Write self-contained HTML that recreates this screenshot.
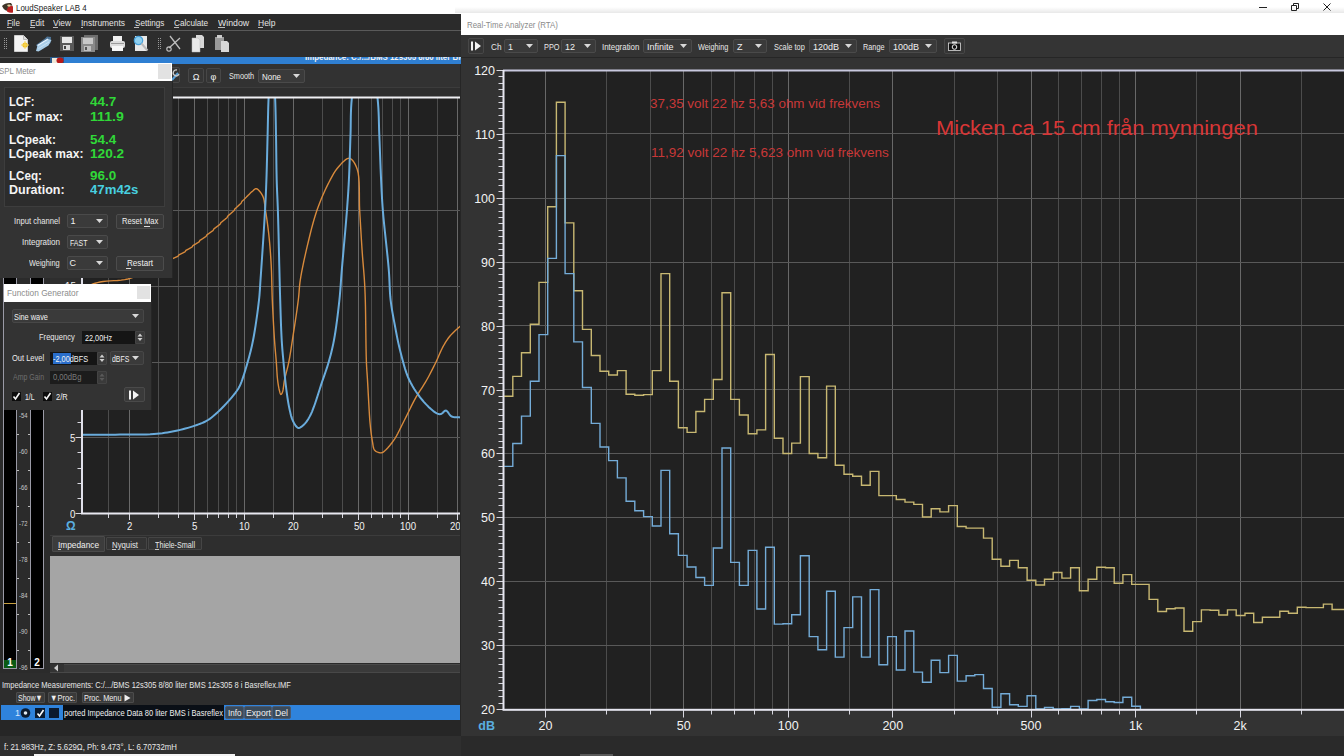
<!DOCTYPE html>
<html><head><meta charset="utf-8"><title>LoudSpeaker LAB 4</title>
<style>
html,body{margin:0;padding:0}
body{width:1344px;height:756px;overflow:hidden;position:relative;background:#2d2d2d;font-family:"Liberation Sans",sans-serif}
.r{position:absolute}
.t{position:absolute;white-space:pre;line-height:1;transform-origin:0 0;font-family:"Liberation Sans",sans-serif}
svg.r{overflow:visible}
</style></head><body>
<div class="r" style="left:0px;top:0px;width:1344px;height:14px;background:#ffffff;"></div>
<svg class="r" style="left:1px;top:2px" width="13" height="12" viewBox="0 0 13 12"><path d="M7 4 Q10 3 12 4.5 L12 10.5 Q9 11.5 6 9.5 Q5 7 7 4Z" fill="#b82222"/><path d="M1 4 Q4 0.5 10 1 L11.5 3.5 Q9 3 7 5 L5.5 9 Q2 7 1 4Z" fill="#3e3528"/><ellipse cx="8" cy="3.6" rx="1.8" ry="1.1" fill="#e6d4a0"/></svg>
<div class="t" style="left:16.00px;top:4px;font-size:9px;color:#202020;transform:scaleX(0.876);">LoudSpeaker LAB 4</div>
<div class="r" style="left:0px;top:14px;width:461px;height:16px;background:#2b2b2b;"></div>
<div class="t" style="left:7.00px;top:19px;font-size:9px;color:#e4e4e4;transform:scaleX(0.883);">File</div>
<div class="r" style="left:7px;top:27px;width:5px;height:1px;background:#bbbbbb;"></div>
<div class="t" style="left:29.50px;top:19px;font-size:9px;color:#e4e4e4;transform:scaleX(0.916);">Edit</div>
<div class="r" style="left:30px;top:27px;width:5px;height:1px;background:#bbbbbb;"></div>
<div class="t" style="left:53.00px;top:19px;font-size:9px;color:#e4e4e4;transform:scaleX(0.930);">View</div>
<div class="r" style="left:53px;top:27px;width:5px;height:1px;background:#bbbbbb;"></div>
<div class="t" style="left:80.60px;top:19px;font-size:9px;color:#e4e4e4;transform:scaleX(0.936);">Instruments</div>
<div class="r" style="left:81px;top:27px;width:2px;height:1px;background:#bbbbbb;"></div>
<div class="t" style="left:134.50px;top:19px;font-size:9px;color:#e4e4e4;transform:scaleX(0.901);">Settings</div>
<div class="r" style="left:134px;top:27px;width:5px;height:1px;background:#bbbbbb;"></div>
<div class="t" style="left:173.80px;top:19px;font-size:9px;color:#e4e4e4;transform:scaleX(0.911);">Calculate</div>
<div class="r" style="left:174px;top:27px;width:5px;height:1px;background:#bbbbbb;"></div>
<div class="t" style="left:217.50px;top:19px;font-size:9px;color:#e4e4e4;transform:scaleX(0.975);">Window</div>
<div class="r" style="left:218px;top:27px;width:7px;height:1px;background:#bbbbbb;"></div>
<div class="t" style="left:258.30px;top:19px;font-size:9px;color:#e4e4e4;transform:scaleX(0.945);">Help</div>
<div class="r" style="left:258px;top:27px;width:5px;height:1px;background:#bbbbbb;"></div>
<div class="r" style="left:0px;top:30px;width:461px;height:1px;background:#5a5a5a;"></div>
<div class="r" style="left:0px;top:31px;width:461px;height:26px;background:#2d2d2d;"></div>
<div class="r" style="left:4px;top:38px;width:1px;height:1px;background:#9a9a9a;"></div><div class="r" style="left:6px;top:38px;width:1px;height:1px;background:#9a9a9a;"></div><div class="r" style="left:4px;top:40px;width:1px;height:1px;background:#9a9a9a;"></div><div class="r" style="left:6px;top:40px;width:1px;height:1px;background:#9a9a9a;"></div><div class="r" style="left:4px;top:42px;width:1px;height:1px;background:#9a9a9a;"></div><div class="r" style="left:6px;top:42px;width:1px;height:1px;background:#9a9a9a;"></div><div class="r" style="left:4px;top:44px;width:1px;height:1px;background:#9a9a9a;"></div><div class="r" style="left:6px;top:44px;width:1px;height:1px;background:#9a9a9a;"></div><div class="r" style="left:4px;top:46px;width:1px;height:1px;background:#9a9a9a;"></div><div class="r" style="left:6px;top:46px;width:1px;height:1px;background:#9a9a9a;"></div><div class="r" style="left:4px;top:48px;width:1px;height:1px;background:#9a9a9a;"></div><div class="r" style="left:6px;top:48px;width:1px;height:1px;background:#9a9a9a;"></div>
<div class="r" style="left:158px;top:38px;width:1px;height:1px;background:#9a9a9a;"></div><div class="r" style="left:160px;top:38px;width:1px;height:1px;background:#9a9a9a;"></div><div class="r" style="left:158px;top:40px;width:1px;height:1px;background:#9a9a9a;"></div><div class="r" style="left:160px;top:40px;width:1px;height:1px;background:#9a9a9a;"></div><div class="r" style="left:158px;top:42px;width:1px;height:1px;background:#9a9a9a;"></div><div class="r" style="left:160px;top:42px;width:1px;height:1px;background:#9a9a9a;"></div><div class="r" style="left:158px;top:44px;width:1px;height:1px;background:#9a9a9a;"></div><div class="r" style="left:160px;top:44px;width:1px;height:1px;background:#9a9a9a;"></div><div class="r" style="left:158px;top:46px;width:1px;height:1px;background:#9a9a9a;"></div><div class="r" style="left:160px;top:46px;width:1px;height:1px;background:#9a9a9a;"></div><div class="r" style="left:158px;top:48px;width:1px;height:1px;background:#9a9a9a;"></div><div class="r" style="left:160px;top:48px;width:1px;height:1px;background:#9a9a9a;"></div>
<svg class="r" style="left:13px;top:34px" width="16" height="19"><path d="M1.5 1.5h9l4 4v12h-13z" fill="#f4f4f4" stroke="#cfcfcf"/><path d="M10.5 1.5v4h4" fill="#ddd" stroke="#bbb"/><circle cx="12" cy="11" r="2.6" fill="#f2c020"/><path d="M12 7v8M8 11h8" stroke="#f5d860" stroke-width="1"/></svg>
<svg class="r" style="left:35px;top:35px" width="17" height="17"><path d="M1 10L10 3.5 12 1.5 16 2 15.5 8 5 15.5z" fill="#4f7597"/><path d="M1 16L2.5 10.5 13 4 16.5 5 13.5 10.5 3.5 16.5z" fill="#a9cde8"/><path d="M2.5 10.5L13 4" stroke="#eaf5ff" stroke-width="1.2"/><path d="M3.5 13.5L14 7" stroke="#d0e6f6" stroke-width="0.8"/></svg>
<svg class="r" style="left:59px;top:35px" width="16" height="17"><rect x="1" y="1" width="14" height="15" fill="#5a5a5a"/><rect x="3" y="2" width="10" height="6" fill="#e8e8e8"/><rect x="4" y="10" width="7" height="5" fill="#dcdcdc"/><rect x="5" y="11" width="2" height="3" fill="#444"/></svg>
<svg class="r" style="left:80px;top:34px" width="19" height="19"><rect x="4" y="1" width="14" height="15" fill="#6e6e6e"/><rect x="1" y="3" width="14" height="15" fill="#8a8a8a"/><rect x="3" y="4" width="10" height="6" fill="#c8c8c8"/><rect x="4" y="12" width="7" height="5" fill="#c0c0c0"/><rect x="5" y="13" width="2" height="3" fill="#555"/></svg>
<svg class="r" style="left:109px;top:35px" width="17" height="17"><rect x="4" y="1" width="9" height="5" fill="#f0f0f0"/><rect x="1" y="6" width="15" height="7" rx="2" fill="#dcdcdc"/><rect x="3" y="11" width="11" height="5" fill="#f8f8f8"/><rect x="2" y="8" width="13" height="1" fill="#9a9a9a"/></svg>
<svg class="r" style="left:132px;top:34px" width="18" height="19"><rect x="3" y="2" width="12" height="15" fill="#e8e8e8"/><circle cx="6.5" cy="6.5" r="4.2" fill="#8fd0f0" stroke="#4aa0d8" stroke-width="1.2"/><path d="M9.5 9.5l6 7" stroke="#bbb" stroke-width="2"/></svg>
<svg class="r" style="left:166px;top:34px" width="17" height="19"><path d="M4 2l10 13M14 4l-11 10" stroke="#bdbdbd" stroke-width="1.3" fill="none"/><circle cx="3" cy="15" r="2.2" fill="none" stroke="#bdbdbd" stroke-width="1.2"/></svg>
<svg class="r" style="left:191px;top:34px" width="14" height="19"><path d="M5 1h6l2 2v11h-8z" fill="#d8d8d8"/><path d="M1 4h6l2 2v12h-8z" fill="#e8e8e8" stroke="#bbb" stroke-width="0.5"/></svg>
<svg class="r" style="left:214px;top:34px" width="16" height="19"><rect x="1" y="3" width="9" height="13" fill="#9a9a9a"/><rect x="3" y="1" width="5" height="3" fill="#ccc"/><path d="M7 7h6l2 2v9h-8z" fill="#d8d8d8"/></svg>
<div class="r" style="left:0px;top:57px;width:461px;height:7px;background:#2a2a2a;"></div>
<div class="r" style="left:0px;top:57px;width:50px;height:1px;background:#505050;"></div>
<div class="r" style="left:50px;top:57px;width:14px;height:7px;background:#2a5a8a;"></div>
<div class="r" style="left:52px;top:58px;width:6px;height:5px;background:#efe8d8;"></div>
<svg class="r" style="left:56px;top:57px" width="8" height="7"><ellipse cx="4" cy="3.5" rx="3.5" ry="3" fill="#b81818"/></svg>
<div class="r" style="left:64px;top:57px;width:397px;height:7px;background:#2f7fd2;"></div>
<div class="r" style="left:300px;top:57px;width:161px;height:7px;overflow:hidden"><div class="t" style="left:5.00px;top:-4px;font-size:9px;color:#f0f0f0;font-weight:bold;transform:scaleX(0.875);">Impedance: C:/.../BMS 12s305 8/80 liter BMS</div></div>
<div class="r" style="left:0px;top:64px;width:461px;height:609px;background:#2e2e2e;"></div>
<div class="r" style="left:50px;top:64px;width:411px;height:23px;background:#323232;"></div>
<div class="r" style="left:50px;top:87px;width:411px;height:1px;background:#3c3c3c;"></div>
<div class="r" style="left:166px;top:67px;width:14px;height:16px;box-sizing:border-box;background:#353535;border:1px solid #474747;border-radius:2px"></div>
<svg class="r" style="left:170px;top:69px" width="10" height="12"><path d="M2 11l6-7" stroke="#5aa0d8" stroke-width="2"/><path d="M7 1a3 3 0 1 0 2 4" fill="none" stroke="#ccc" stroke-width="1.3"/></svg>
<div class="r" style="left:188px;top:68px;width:16px;height:15px;box-sizing:border-box;background:#353535;border:1px solid #474747;border-radius:2px"></div>
<div class="t" style="left:192.64px;top:73px;font-size:9px;color:#f0f0f0;">Ω</div>
<div class="r" style="left:206px;top:68px;width:15px;height:15px;box-sizing:border-box;background:#353535;border:1px solid #474747;border-radius:2px"></div>
<div class="t" style="left:210.58px;top:73px;font-size:9px;color:#f0f0f0;">φ</div>
<div class="t" style="left:228.80px;top:72px;font-size:9px;color:#e6e6e6;transform:scaleX(0.812);">Smooth</div>
<div class="r" style="left:258px;top:69px;width:47px;height:14px;box-sizing:border-box;background:#3a3a3a;border:1px solid #4a4a4a;border-radius:2px"></div><div class="t" style="left:262.00px;top:73px;font-size:9px;color:#f0f0f0;transform:scaleX(0.883);">None</div><svg class="r" style="left:293px;top:74.0px" width="7" height="4"><path d="M0 0h7l-3.5 4z" fill="#d8d8d8"/></svg>
<svg class="r" style="left:0;top:0" width="1344" height="756"><rect x="82" y="97" width="379" height="417" fill="#212121"/><line x1="108.50" y1="98" x2="108.50" y2="513" stroke="#4c4c4c" stroke-width="1"/><line x1="129.50" y1="98" x2="129.50" y2="513" stroke="#686868" stroke-width="1"/><line x1="158.50" y1="98" x2="158.50" y2="513" stroke="#4c4c4c" stroke-width="1"/><line x1="178.50" y1="98" x2="178.50" y2="513" stroke="#4c4c4c" stroke-width="1"/><line x1="194.50" y1="98" x2="194.50" y2="513" stroke="#686868" stroke-width="1"/><line x1="207.50" y1="98" x2="207.50" y2="513" stroke="#4c4c4c" stroke-width="1"/><line x1="218.50" y1="98" x2="218.50" y2="513" stroke="#4c4c4c" stroke-width="1"/><line x1="228.50" y1="98" x2="228.50" y2="513" stroke="#4c4c4c" stroke-width="1"/><line x1="236.50" y1="98" x2="236.50" y2="513" stroke="#4c4c4c" stroke-width="1"/><line x1="244.50" y1="98" x2="244.50" y2="513" stroke="#686868" stroke-width="1"/><line x1="273.50" y1="98" x2="273.50" y2="513" stroke="#4c4c4c" stroke-width="1"/><line x1="293.50" y1="98" x2="293.50" y2="513" stroke="#686868" stroke-width="1"/><line x1="322.50" y1="98" x2="322.50" y2="513" stroke="#4c4c4c" stroke-width="1"/><line x1="342.50" y1="98" x2="342.50" y2="513" stroke="#4c4c4c" stroke-width="1"/><line x1="358.50" y1="98" x2="358.50" y2="513" stroke="#686868" stroke-width="1"/><line x1="371.50" y1="98" x2="371.50" y2="513" stroke="#4c4c4c" stroke-width="1"/><line x1="382.50" y1="98" x2="382.50" y2="513" stroke="#4c4c4c" stroke-width="1"/><line x1="392.50" y1="98" x2="392.50" y2="513" stroke="#4c4c4c" stroke-width="1"/><line x1="400.50" y1="98" x2="400.50" y2="513" stroke="#4c4c4c" stroke-width="1"/><line x1="408.50" y1="98" x2="408.50" y2="513" stroke="#686868" stroke-width="1"/><line x1="437.50" y1="98" x2="437.50" y2="513" stroke="#4c4c4c" stroke-width="1"/><line x1="457.50" y1="98" x2="457.50" y2="513" stroke="#686868" stroke-width="1"/><line x1="83" y1="437.50" x2="461" y2="437.50" stroke="#595959" stroke-width="1"/><line x1="83" y1="362.50" x2="461" y2="362.50" stroke="#595959" stroke-width="1"/><line x1="83" y1="286.50" x2="461" y2="286.50" stroke="#595959" stroke-width="1"/><line x1="83" y1="210.50" x2="461" y2="210.50" stroke="#595959" stroke-width="1"/><line x1="83" y1="135.50" x2="461" y2="135.50" stroke="#595959" stroke-width="1"/><line x1="75.5" y1="513.50" x2="82" y2="513.50" stroke="#d8d8e0" stroke-width="1"/><line x1="77.5" y1="498.50" x2="82" y2="498.50" stroke="#d8d8e0" stroke-width="1"/><line x1="77.5" y1="483.50" x2="82" y2="483.50" stroke="#d8d8e0" stroke-width="1"/><line x1="77.5" y1="468.50" x2="82" y2="468.50" stroke="#d8d8e0" stroke-width="1"/><line x1="77.5" y1="452.50" x2="82" y2="452.50" stroke="#d8d8e0" stroke-width="1"/><line x1="75.5" y1="437.50" x2="82" y2="437.50" stroke="#d8d8e0" stroke-width="1"/><line x1="77.5" y1="422.50" x2="82" y2="422.50" stroke="#d8d8e0" stroke-width="1"/><line x1="77.5" y1="407.50" x2="82" y2="407.50" stroke="#d8d8e0" stroke-width="1"/><line x1="77.5" y1="392.50" x2="82" y2="392.50" stroke="#d8d8e0" stroke-width="1"/><line x1="77.5" y1="377.50" x2="82" y2="377.50" stroke="#d8d8e0" stroke-width="1"/><line x1="75.5" y1="362.50" x2="82" y2="362.50" stroke="#d8d8e0" stroke-width="1"/><line x1="77.5" y1="346.50" x2="82" y2="346.50" stroke="#d8d8e0" stroke-width="1"/><line x1="77.5" y1="331.50" x2="82" y2="331.50" stroke="#d8d8e0" stroke-width="1"/><line x1="77.5" y1="316.50" x2="82" y2="316.50" stroke="#d8d8e0" stroke-width="1"/><line x1="77.5" y1="301.50" x2="82" y2="301.50" stroke="#d8d8e0" stroke-width="1"/><line x1="75.5" y1="286.50" x2="82" y2="286.50" stroke="#d8d8e0" stroke-width="1"/><line x1="77.5" y1="271.50" x2="82" y2="271.50" stroke="#d8d8e0" stroke-width="1"/><line x1="77.5" y1="256.50" x2="82" y2="256.50" stroke="#d8d8e0" stroke-width="1"/><line x1="77.5" y1="240.50" x2="82" y2="240.50" stroke="#d8d8e0" stroke-width="1"/><line x1="77.5" y1="225.50" x2="82" y2="225.50" stroke="#d8d8e0" stroke-width="1"/><line x1="75.5" y1="210.50" x2="82" y2="210.50" stroke="#d8d8e0" stroke-width="1"/><line x1="77.5" y1="195.50" x2="82" y2="195.50" stroke="#d8d8e0" stroke-width="1"/><line x1="77.5" y1="180.50" x2="82" y2="180.50" stroke="#d8d8e0" stroke-width="1"/><line x1="77.5" y1="165.50" x2="82" y2="165.50" stroke="#d8d8e0" stroke-width="1"/><line x1="77.5" y1="150.50" x2="82" y2="150.50" stroke="#d8d8e0" stroke-width="1"/><line x1="75.5" y1="135.50" x2="82" y2="135.50" stroke="#d8d8e0" stroke-width="1"/><line x1="77.5" y1="119.50" x2="82" y2="119.50" stroke="#d8d8e0" stroke-width="1"/><line x1="77.5" y1="104.50" x2="82" y2="104.50" stroke="#d8d8e0" stroke-width="1"/><line x1="108.50" y1="514" x2="108.50" y2="518" stroke="#d8d8e0" stroke-width="1"/><line x1="129.50" y1="514" x2="129.50" y2="520" stroke="#d8d8e0" stroke-width="1"/><line x1="158.50" y1="514" x2="158.50" y2="518" stroke="#d8d8e0" stroke-width="1"/><line x1="178.50" y1="514" x2="178.50" y2="518" stroke="#d8d8e0" stroke-width="1"/><line x1="194.50" y1="514" x2="194.50" y2="520" stroke="#d8d8e0" stroke-width="1"/><line x1="207.50" y1="514" x2="207.50" y2="518" stroke="#d8d8e0" stroke-width="1"/><line x1="218.50" y1="514" x2="218.50" y2="518" stroke="#d8d8e0" stroke-width="1"/><line x1="228.50" y1="514" x2="228.50" y2="518" stroke="#d8d8e0" stroke-width="1"/><line x1="236.50" y1="514" x2="236.50" y2="518" stroke="#d8d8e0" stroke-width="1"/><line x1="244.50" y1="514" x2="244.50" y2="520" stroke="#d8d8e0" stroke-width="1"/><line x1="273.50" y1="514" x2="273.50" y2="518" stroke="#d8d8e0" stroke-width="1"/><line x1="293.50" y1="514" x2="293.50" y2="520" stroke="#d8d8e0" stroke-width="1"/><line x1="322.50" y1="514" x2="322.50" y2="518" stroke="#d8d8e0" stroke-width="1"/><line x1="342.50" y1="514" x2="342.50" y2="518" stroke="#d8d8e0" stroke-width="1"/><line x1="358.50" y1="514" x2="358.50" y2="520" stroke="#d8d8e0" stroke-width="1"/><line x1="371.50" y1="514" x2="371.50" y2="518" stroke="#d8d8e0" stroke-width="1"/><line x1="382.50" y1="514" x2="382.50" y2="518" stroke="#d8d8e0" stroke-width="1"/><line x1="392.50" y1="514" x2="392.50" y2="518" stroke="#d8d8e0" stroke-width="1"/><line x1="400.50" y1="514" x2="400.50" y2="518" stroke="#d8d8e0" stroke-width="1"/><line x1="408.50" y1="514" x2="408.50" y2="520" stroke="#d8d8e0" stroke-width="1"/><line x1="437.50" y1="514" x2="437.50" y2="518" stroke="#d8d8e0" stroke-width="1"/><line x1="457.50" y1="514" x2="457.50" y2="520" stroke="#d8d8e0" stroke-width="1"/><clipPath id="ic"><rect x="83" y="98" width="378" height="415"/></clipPath><path clip-path="url(#ic)" d="M82.00 288.00 L84.22 287.23 L86.39 286.43 L88.55 285.61 L90.72 284.80 L92.92 284.02 L95.18 283.28 L97.53 282.60 L100.00 282.00 L103.21 281.45 L106.63 281.08 L110.20 280.84 L113.85 280.65 L117.52 280.44 L121.14 280.14 L124.66 279.68 L128.00 279.00 L130.92 278.17 L133.76 277.21 L136.53 276.15 L139.25 274.99 L141.94 273.78 L144.61 272.52 L147.29 271.26 L150.00 270.00 L152.96 268.60 L156.20 267.01 L159.53 265.32 L162.81 263.63 L165.85 262.05 L168.51 260.66 L170.62 259.58 L172.00 258.89 L172.19 258.81 L172.34 258.74 L172.47 258.68 L172.58 258.64 L172.68 258.60 L172.78 258.56 L172.88 258.51 L173.00 258.46 L173.13 258.41 L173.25 258.35 L173.38 258.30 L173.50 258.24 L173.63 258.19 L173.75 258.13 L173.88 258.08 L174.00 258.02 L174.13 257.97 L174.25 257.91 L174.38 257.86 L174.50 257.80 L174.63 257.75 L174.75 257.69 L174.88 257.63 L175.00 257.58 L175.13 257.52 L175.25 257.47 L175.38 257.41 L175.50 257.35 L175.63 257.30 L175.75 257.24 L175.88 257.18 L176.00 257.13 L176.13 257.07 L176.25 257.01 L176.38 256.95 L176.50 256.90 L176.63 256.84 L176.75 256.78 L176.88 256.72 L177.00 256.66 L177.13 256.61 L177.25 256.56 L177.38 256.51 L177.51 256.47 L177.64 256.41 L177.76 256.35 L177.88 256.28 L178.00 256.20 L178.14 256.06 L178.26 255.89 L178.38 255.71 L178.50 255.51 L178.62 255.31 L178.74 255.12 L178.86 254.96 L179.00 254.82 L179.12 254.73 L179.24 254.66 L179.36 254.60 L179.49 254.54 L179.62 254.49 L179.75 254.44 L179.87 254.39 L180.00 254.33 L180.13 254.27 L180.25 254.21 L180.38 254.15 L180.50 254.09 L180.63 254.03 L180.75 253.97 L180.88 253.90 L181.00 253.84 L181.13 253.78 L181.25 253.72 L181.38 253.66 L181.50 253.59 L181.63 253.53 L181.75 253.47 L181.88 253.41 L182.00 253.34 L182.13 253.28 L182.25 253.22 L182.38 253.15 L182.50 253.09 L182.63 253.03 L182.75 252.96 L182.88 252.90 L183.00 252.84 L183.13 252.77 L183.25 252.71 L183.38 252.64 L183.50 252.58 L183.63 252.52 L183.75 252.45 L183.88 252.39 L184.00 252.32 L184.13 252.26 L184.25 252.21 L184.38 252.15 L184.51 252.10 L184.64 252.04 L184.76 251.97 L184.88 251.89 L185.00 251.80 L185.14 251.66 L185.26 251.48 L185.38 251.29 L185.50 251.09 L185.62 250.88 L185.74 250.69 L185.86 250.52 L186.00 250.37 L186.12 250.28 L186.24 250.20 L186.36 250.13 L186.49 250.07 L186.62 250.01 L186.75 249.96 L186.87 249.90 L187.00 249.83 L187.13 249.77 L187.25 249.70 L187.38 249.63 L187.50 249.56 L187.63 249.49 L187.75 249.43 L187.88 249.36 L188.00 249.29 L188.13 249.22 L188.25 249.15 L188.38 249.08 L188.50 249.01 L188.63 248.94 L188.75 248.88 L188.88 248.81 L189.00 248.74 L189.13 248.67 L189.25 248.60 L189.38 248.53 L189.50 248.46 L189.63 248.39 L189.75 248.32 L189.88 248.25 L190.00 248.18 L190.13 248.11 L190.25 248.03 L190.38 247.96 L190.50 247.89 L190.63 247.82 L190.75 247.75 L190.88 247.68 L191.00 247.61 L191.13 247.54 L191.25 247.48 L191.38 247.42 L191.51 247.36 L191.64 247.29 L191.76 247.22 L191.88 247.13 L192.00 247.03 L192.14 246.88 L192.26 246.70 L192.38 246.50 L192.50 246.29 L192.62 246.08 L192.74 245.88 L192.86 245.70 L193.00 245.55 L193.12 245.45 L193.24 245.36 L193.36 245.29 L193.49 245.22 L193.62 245.16 L193.75 245.10 L193.87 245.03 L194.00 244.96 L194.13 244.89 L194.25 244.81 L194.38 244.74 L194.50 244.66 L194.63 244.59 L194.75 244.51 L194.88 244.44 L195.00 244.36 L195.13 244.29 L195.25 244.21 L195.38 244.14 L195.50 244.06 L195.63 243.98 L195.75 243.91 L195.88 243.83 L196.00 243.76 L196.13 243.68 L196.25 243.60 L196.38 243.53 L196.50 243.45 L196.63 243.37 L196.75 243.30 L196.88 243.22 L197.00 243.14 L197.13 243.06 L197.25 242.99 L197.38 242.91 L197.50 242.83 L197.63 242.75 L197.75 242.68 L197.88 242.60 L198.00 242.52 L198.13 242.45 L198.25 242.38 L198.38 242.31 L198.51 242.24 L198.64 242.17 L198.76 242.09 L198.88 242.00 L199.00 241.89 L199.14 241.74 L199.26 241.55 L199.38 241.34 L199.50 241.13 L199.62 240.91 L199.74 240.70 L199.86 240.52 L200.00 240.36 L200.12 240.25 L200.24 240.16 L200.36 240.08 L200.49 240.00 L200.62 239.93 L200.75 239.86 L200.87 239.79 L201.00 239.71 L201.13 239.63 L201.25 239.55 L201.38 239.47 L201.50 239.39 L201.63 239.31 L201.75 239.22 L201.88 239.14 L202.00 239.06 L202.13 238.98 L202.25 238.90 L202.38 238.81 L202.50 238.73 L202.63 238.65 L202.75 238.57 L202.88 238.48 L203.00 238.40 L203.13 238.32 L203.25 238.24 L203.38 238.15 L203.50 238.07 L203.63 237.99 L203.75 237.90 L203.88 237.82 L204.00 237.74 L204.13 237.65 L204.25 237.57 L204.38 237.48 L204.50 237.40 L204.63 237.31 L204.75 237.23 L204.88 237.15 L205.00 237.06 L205.13 236.98 L205.25 236.90 L205.38 236.83 L205.51 236.75 L205.64 236.67 L205.76 236.59 L205.88 236.49 L206.00 236.38 L206.14 236.21 L206.26 236.02 L206.38 235.81 L206.50 235.59 L206.62 235.36 L206.74 235.15 L206.86 234.96 L207.00 234.79 L207.12 234.68 L207.24 234.58 L207.36 234.49 L207.49 234.41 L207.62 234.33 L207.75 234.26 L207.87 234.18 L208.00 234.09 L208.13 234.00 L208.25 233.92 L208.38 233.83 L208.50 233.74 L208.63 233.65 L208.75 233.56 L208.88 233.48 L209.00 233.39 L209.13 233.30 L209.25 233.21 L209.38 233.12 L209.50 233.03 L209.63 232.94 L209.75 232.85 L209.88 232.76 L210.00 232.68 L210.13 232.59 L210.25 232.50 L210.38 232.41 L210.50 232.32 L210.63 232.23 L210.75 232.14 L210.88 232.05 L211.00 231.96 L211.13 231.86 L211.25 231.77 L211.38 231.68 L211.50 231.59 L211.63 231.50 L211.75 231.41 L211.88 231.32 L212.00 231.23 L212.13 231.14 L212.25 231.06 L212.38 230.98 L212.51 230.89 L212.64 230.81 L212.76 230.71 L212.88 230.61 L213.00 230.49 L213.14 230.32 L213.26 230.12 L213.38 229.90 L213.50 229.67 L213.62 229.44 L213.74 229.22 L213.86 229.02 L214.00 228.85 L214.12 228.73 L214.24 228.63 L214.36 228.53 L214.49 228.44 L214.62 228.36 L214.75 228.28 L214.87 228.19 L215.00 228.10 L215.13 228.01 L215.25 227.91 L215.38 227.82 L215.50 227.72 L215.63 227.63 L215.75 227.53 L215.88 227.44 L216.00 227.34 L216.13 227.25 L216.25 227.15 L216.38 227.06 L216.50 226.96 L216.63 226.86 L216.75 226.77 L216.88 226.67 L217.00 226.58 L217.13 226.48 L217.25 226.38 L217.38 226.29 L217.50 226.19 L217.63 226.09 L217.75 226.00 L217.88 225.90 L218.00 225.80 L218.13 225.71 L218.25 225.61 L218.38 225.51 L218.50 225.41 L218.63 225.32 L218.75 225.22 L218.88 225.12 L219.00 225.02 L219.13 224.93 L219.25 224.84 L219.38 224.75 L219.51 224.66 L219.64 224.57 L219.76 224.47 L219.88 224.36 L220.00 224.23 L220.14 224.05 L220.26 223.85 L220.38 223.62 L220.50 223.39 L220.62 223.15 L220.74 222.93 L220.86 222.72 L221.00 222.54 L221.12 222.41 L221.24 222.30 L221.36 222.20 L221.49 222.10 L221.62 222.01 L221.75 221.92 L221.87 221.83 L222.00 221.73 L222.13 221.63 L222.25 221.53 L222.38 221.43 L222.50 221.33 L222.63 221.23 L222.75 221.13 L222.88 221.02 L223.00 220.92 L223.13 220.82 L223.25 220.72 L223.38 220.62 L223.50 220.51 L223.63 220.41 L223.75 220.31 L223.88 220.21 L224.00 220.10 L224.13 220.00 L224.25 219.90 L224.38 219.79 L224.50 219.69 L224.63 219.59 L224.75 219.48 L224.88 219.38 L225.00 219.28 L225.13 219.17 L225.25 219.07 L225.38 218.96 L225.50 218.86 L225.63 218.76 L225.75 218.65 L225.88 218.55 L226.00 218.44 L226.13 218.34 L226.25 218.24 L226.38 218.15 L226.51 218.05 L226.64 217.95 L226.76 217.85 L226.88 217.73 L227.00 217.60 L227.14 217.41 L227.26 217.20 L227.38 216.97 L227.50 216.73 L227.62 216.49 L227.74 216.25 L227.86 216.04 L228.00 215.85 L228.12 215.72 L228.24 215.60 L228.36 215.49 L228.49 215.39 L228.62 215.29 L228.75 215.20 L228.87 215.10 L229.00 214.99 L229.13 214.89 L229.25 214.78 L229.38 214.67 L229.50 214.56 L229.63 214.46 L229.75 214.35 L229.88 214.24 L230.00 214.13 L230.13 214.02 L230.25 213.91 L230.38 213.80 L230.50 213.69 L230.63 213.59 L230.75 213.48 L230.88 213.37 L231.00 213.26 L231.13 213.15 L231.25 213.04 L231.38 212.93 L231.50 212.82 L231.63 212.71 L231.75 212.60 L231.88 212.49 L232.00 212.38 L232.13 212.27 L232.25 212.16 L232.38 212.05 L232.50 211.94 L232.63 211.82 L232.75 211.71 L232.88 211.60 L233.00 211.49 L233.13 211.38 L233.25 211.28 L233.38 211.18 L233.51 211.08 L233.64 210.97 L233.76 210.85 L233.88 210.73 L234.00 210.60 L234.14 210.40 L234.26 210.18 L234.38 209.94 L234.50 209.70 L234.62 209.45 L234.74 209.21 L234.86 208.99 L235.00 208.79 L235.12 208.66 L235.24 208.53 L235.36 208.42 L235.49 208.31 L235.62 208.20 L235.75 208.10 L235.87 207.99 L236.00 207.88 L236.13 207.77 L236.25 207.65 L236.38 207.54 L236.50 207.42 L236.63 207.31 L236.75 207.20 L236.88 207.08 L237.00 206.97 L237.13 206.85 L237.25 206.73 L237.38 206.62 L237.50 206.50 L237.63 206.39 L237.75 206.27 L237.88 206.16 L238.00 206.04 L238.13 205.92 L238.25 205.81 L238.38 205.69 L238.50 205.57 L238.63 205.46 L238.75 205.34 L238.88 205.22 L239.00 205.11 L239.13 204.99 L239.25 204.87 L239.38 204.75 L239.50 204.64 L239.63 204.52 L239.75 204.40 L239.88 204.28 L240.00 204.17 L240.13 204.05 L240.25 203.94 L240.38 203.83 L240.51 203.72 L240.64 203.61 L240.76 203.49 L240.88 203.36 L241.00 203.22 L241.14 203.02 L241.26 202.79 L241.38 202.54 L241.50 202.29 L241.62 202.04 L241.74 201.79 L241.86 201.56 L242.00 201.36 L242.12 201.22 L242.24 201.09 L242.36 200.97 L242.49 200.85 L242.62 200.74 L242.75 200.63 L242.87 200.52 L243.00 200.40 L243.13 200.28 L243.25 200.16 L243.38 200.03 L243.50 199.91 L243.63 199.79 L243.75 199.67 L243.88 199.55 L244.00 199.43 L244.13 199.31 L244.25 199.18 L244.38 199.06 L244.50 198.94 L244.63 198.82 L244.75 198.69 L244.88 198.57 L245.00 198.45 L245.13 198.33 L245.25 198.20 L245.38 198.08 L245.50 197.96 L245.63 197.83 L245.75 197.71 L245.88 197.59 L246.00 197.46 L246.13 197.34 L246.25 197.21 L246.38 197.09 L246.50 196.97 L246.63 196.84 L246.75 196.72 L246.88 196.59 L247.00 196.47 L247.12 196.35 L247.23 196.23 L247.35 196.12 L247.46 196.01 L247.58 195.89 L247.70 195.76 L247.84 195.62 L248.00 195.47 L248.37 195.10 L248.80 194.66 L249.28 194.16 L249.80 193.63 L250.35 193.10 L250.90 192.56 L251.46 192.06 L252.00 191.60 L252.51 191.15 L253.04 190.65 L253.57 190.14 L254.10 189.66 L254.64 189.24 L255.19 188.91 L255.74 188.72 L256.30 188.70 L257.12 188.99 L258.00 189.59 L258.91 190.45 L259.83 191.50 L260.71 192.69 L261.54 193.94 L262.28 195.20 L262.90 196.40 L263.43 197.68 L263.83 199.01 L264.13 200.39 L264.36 201.83 L264.56 203.33 L264.74 204.91 L264.94 206.56 L265.20 208.30 L265.65 211.07 L266.11 214.08 L266.59 217.28 L267.07 220.63 L267.54 224.07 L267.99 227.56 L268.41 231.06 L268.80 234.50 L269.18 238.18 L269.54 241.91 L269.87 245.67 L270.18 249.47 L270.46 253.30 L270.73 257.17 L270.97 261.07 L271.20 265.00 L271.40 269.24 L271.56 273.52 L271.68 277.84 L271.79 282.20 L271.89 286.60 L272.00 291.03 L272.13 295.50 L272.30 300.00 L272.52 304.95 L272.77 310.09 L273.04 315.33 L273.32 320.58 L273.61 325.75 L273.91 330.77 L274.21 335.55 L274.50 340.00 L274.72 343.08 L274.95 346.01 L275.18 348.83 L275.41 351.55 L275.65 354.20 L275.87 356.81 L276.09 359.40 L276.30 362.00 L276.47 364.37 L276.62 366.75 L276.76 369.12 L276.90 371.45 L277.05 373.72 L277.20 375.92 L277.39 378.02 L277.60 380.00 L277.78 381.42 L277.96 382.81 L278.16 384.15 L278.36 385.44 L278.58 386.68 L278.81 387.86 L279.05 388.97 L279.30 390.00 L279.48 390.71 L279.66 391.46 L279.85 392.21 L280.05 392.91 L280.25 393.53 L280.46 394.02 L280.67 394.36 L280.90 394.50 L281.09 394.46 L281.29 394.30 L281.50 394.05 L281.71 393.72 L281.92 393.34 L282.12 392.91 L282.32 392.46 L282.50 392.00 L282.82 390.96 L283.09 389.71 L283.31 388.28 L283.52 386.73 L283.73 385.08 L283.95 383.38 L284.20 381.67 L284.50 380.00 L284.95 377.93 L285.46 375.79 L286.01 373.59 L286.58 371.34 L287.17 369.05 L287.75 366.72 L288.30 364.37 L288.80 362.00 L289.30 359.41 L289.77 356.82 L290.21 354.21 L290.63 351.56 L291.05 348.83 L291.48 346.02 L291.93 343.08 L292.40 340.00 L293.10 335.48 L293.87 330.52 L294.68 325.27 L295.50 319.89 L296.30 314.52 L297.05 309.32 L297.73 304.43 L298.30 300.00 L298.62 297.21 L298.86 294.64 L299.06 292.22 L299.23 289.89 L299.42 287.57 L299.64 285.19 L299.93 282.69 L300.30 280.00 L300.91 276.21 L301.63 272.21 L302.43 268.05 L303.30 263.77 L304.23 259.41 L305.20 255.04 L306.20 250.69 L307.20 246.40 L308.25 241.98 L309.33 237.49 L310.44 232.96 L311.60 228.44 L312.79 223.95 L314.04 219.55 L315.34 215.25 L316.70 211.10 L317.97 207.50 L319.29 203.96 L320.65 200.47 L322.06 197.06 L323.49 193.74 L324.95 190.51 L326.42 187.39 L327.90 184.40 L329.12 181.98 L330.34 179.61 L331.56 177.30 L332.79 175.06 L334.06 172.92 L335.38 170.89 L336.75 168.97 L338.20 167.20 L339.51 165.70 L340.91 164.13 L342.37 162.59 L343.86 161.15 L345.34 159.92 L346.77 158.97 L348.14 158.40 L349.40 158.30 L350.53 158.67 L351.64 159.42 L352.70 160.50 L353.71 161.86 L354.67 163.43 L355.56 165.16 L356.37 167.01 L357.10 168.90 L358.12 172.75 L358.76 177.36 L359.13 182.55 L359.30 188.14 L359.36 193.97 L359.39 199.85 L359.47 205.62 L359.70 211.10 L360.02 216.44 L360.35 221.88 L360.67 227.35 L361.00 232.80 L361.32 238.18 L361.65 243.43 L361.97 248.49 L362.30 253.30 L362.57 256.96 L362.85 260.49 L363.14 263.93 L363.42 267.27 L363.69 270.54 L363.95 273.74 L364.19 276.89 L364.40 280.00 L364.55 282.56 L364.69 284.94 L364.81 287.22 L364.92 289.49 L365.01 291.82 L365.11 294.29 L365.20 296.99 L365.30 300.00 L365.46 306.37 L365.59 313.97 L365.70 322.38 L365.81 331.19 L365.93 339.97 L366.05 348.31 L366.21 355.80 L366.40 362.00 L366.52 364.76 L366.65 367.24 L366.79 369.50 L366.93 371.62 L367.08 373.66 L367.22 375.69 L367.36 377.78 L367.50 380.00 L367.64 382.44 L367.77 384.89 L367.91 387.35 L368.04 389.83 L368.17 392.34 L368.31 394.86 L368.45 397.42 L368.60 400.00 L368.76 402.87 L368.92 405.81 L369.08 408.80 L369.25 411.81 L369.43 414.81 L369.63 417.78 L369.85 420.69 L370.10 423.50 L370.35 425.97 L370.61 428.47 L370.89 430.95 L371.19 433.38 L371.50 435.73 L371.83 437.97 L372.16 440.07 L372.50 442.00 L372.71 443.20 L372.88 444.37 L373.05 445.49 L373.23 446.55 L373.44 447.55 L373.71 448.46 L374.06 449.28 L374.50 450.00 L374.92 450.49 L375.41 450.92 L375.94 451.29 L376.50 451.62 L377.09 451.90 L377.67 452.14 L378.25 452.34 L378.80 452.50 L379.25 452.62 L379.68 452.72 L380.11 452.80 L380.54 452.84 L380.98 452.85 L381.43 452.80 L381.90 452.68 L382.40 452.50 L383.56 451.84 L384.84 450.83 L386.22 449.53 L387.66 448.01 L389.12 446.32 L390.57 444.54 L391.97 442.71 L393.30 440.90 L394.86 438.57 L396.38 436.03 L397.85 433.33 L399.30 430.52 L400.72 427.65 L402.12 424.77 L403.51 421.94 L404.90 419.20 L406.21 416.63 L407.48 414.06 L408.72 411.50 L409.96 408.94 L411.20 406.40 L412.46 403.88 L413.76 401.38 L415.10 398.90 L416.49 396.48 L417.94 394.09 L419.42 391.73 L420.92 389.37 L422.42 387.03 L423.90 384.69 L425.33 382.35 L426.70 380.00 L427.96 377.74 L429.19 375.47 L430.39 373.19 L431.57 370.92 L432.71 368.65 L433.84 366.41 L434.93 364.19 L436.00 362.00 L436.93 360.02 L437.82 358.03 L438.68 356.04 L439.52 354.08 L440.36 352.15 L441.21 350.27 L442.08 348.45 L443.00 346.70 L443.82 345.24 L444.63 343.82 L445.44 342.45 L446.27 341.12 L447.14 339.81 L448.04 338.53 L448.99 337.26 L450.00 336.00 L451.23 334.61 L452.62 333.15 L454.11 331.68 L455.63 330.25 L457.10 328.91 L458.45 327.72 L459.61 326.73 L460.50 326.00 L460.74 325.81 L460.96 325.66 L461.15 325.53 L461.32 325.42 L461.49 325.32 L461.65 325.22 L461.82 325.12 L462.00 325.00" fill="none" stroke="#d88a3c" stroke-width="1.4"/><path clip-path="url(#ic)" d="M82.00 434.80 L86.76 434.78 L91.55 434.76 L96.34 434.74 L101.13 434.73 L105.90 434.71 L110.65 434.68 L115.35 434.65 L120.00 434.60 L124.40 434.57 L128.83 434.56 L133.25 434.56 L137.64 434.55 L141.94 434.50 L146.13 434.41 L150.16 434.25 L154.00 434.00 L156.88 433.75 L159.63 433.46 L162.29 433.15 L164.87 432.79 L167.41 432.40 L169.92 431.98 L172.45 431.51 L175.00 431.00 L177.57 430.45 L180.16 429.86 L182.76 429.22 L185.34 428.55 L187.88 427.84 L190.35 427.11 L192.73 426.36 L195.00 425.60 L196.78 424.98 L198.49 424.38 L200.14 423.78 L201.74 423.15 L203.32 422.48 L204.87 421.75 L206.43 420.93 L208.00 420.00 L209.80 418.81 L211.58 417.50 L213.34 416.08 L215.10 414.58 L216.84 413.00 L218.57 411.37 L220.29 409.70 L222.00 408.00 L223.95 406.02 L225.97 403.87 L228.02 401.62 L230.04 399.33 L231.97 397.06 L233.76 394.88 L235.36 392.84 L236.70 391.00 L237.36 390.04 L237.93 389.19 L238.42 388.40 L238.86 387.63 L239.28 386.84 L239.70 386.00 L240.13 385.07 L240.60 384.00 L241.47 381.86 L242.37 379.40 L243.29 376.69 L244.22 373.81 L245.13 370.83 L246.03 367.81 L246.89 364.85 L247.70 362.00 L248.46 359.31 L249.18 356.67 L249.88 354.06 L250.55 351.44 L251.21 348.76 L251.85 345.98 L252.48 343.08 L253.10 340.00 L253.94 335.49 L254.78 330.53 L255.62 325.29 L256.42 319.91 L257.18 314.54 L257.87 309.33 L258.48 304.43 L259.00 300.00 L259.29 297.26 L259.51 294.81 L259.69 292.53 L259.85 290.33 L259.99 288.08 L260.13 285.69 L260.30 283.03 L260.50 280.00 L260.98 273.17 L261.54 265.02 L262.15 255.96 L262.79 246.39 L263.43 236.70 L264.03 227.31 L264.56 218.61 L265.00 211.00 L265.24 206.58 L265.45 202.53 L265.64 198.73 L265.80 195.10 L265.96 191.51 L266.11 187.87 L266.25 184.07 L266.40 180.00 L266.58 174.75 L266.74 169.24 L266.89 163.56 L267.04 157.77 L267.18 151.94 L267.32 146.16 L267.46 140.49 L267.60 135.00 L267.72 130.20 L267.82 125.57 L267.92 121.04 L268.02 116.53 L268.13 112.00 L268.25 107.35 L268.41 102.54 L268.60 97.50 L268.90 90.11 L269.25 81.29 L269.64 71.78 L270.06 62.33 L270.50 53.68 L270.94 46.58 L271.38 41.77 L271.80 40.00 L272.22 41.77 L272.67 46.57 L273.14 53.68 L273.59 62.33 L274.04 71.78 L274.44 81.29 L274.80 90.11 L275.10 97.50 L275.29 102.54 L275.44 107.35 L275.56 111.99 L275.66 116.53 L275.75 121.04 L275.83 125.57 L275.91 130.20 L276.00 135.00 L276.10 140.49 L276.18 146.16 L276.25 151.94 L276.32 157.77 L276.39 163.56 L276.47 169.24 L276.58 174.75 L276.70 180.00 L276.82 184.08 L276.96 187.92 L277.11 191.61 L277.27 195.24 L277.43 198.90 L277.59 202.69 L277.75 206.69 L277.90 211.00 L278.10 217.61 L278.30 224.89 L278.50 232.61 L278.69 240.56 L278.88 248.50 L279.06 256.20 L279.23 263.44 L279.40 270.00 L279.51 274.20 L279.60 278.11 L279.70 281.80 L279.79 285.36 L279.88 288.88 L279.97 292.43 L280.08 296.11 L280.20 300.00 L280.35 304.81 L280.51 309.88 L280.67 315.10 L280.85 320.39 L281.03 325.62 L281.24 330.70 L281.46 335.53 L281.70 340.00 L281.89 343.05 L282.09 345.90 L282.30 348.62 L282.52 351.25 L282.75 353.85 L282.99 356.47 L283.24 359.17 L283.50 362.00 L283.81 365.38 L284.14 368.89 L284.48 372.50 L284.83 376.13 L285.20 379.76 L285.59 383.31 L285.99 386.74 L286.40 390.00 L286.75 392.59 L287.10 395.12 L287.46 397.60 L287.82 400.02 L288.21 402.37 L288.61 404.66 L289.04 406.87 L289.50 409.00 L289.87 410.67 L290.24 412.30 L290.61 413.90 L291.00 415.44 L291.42 416.93 L291.89 418.36 L292.41 419.71 L293.00 421.00 L293.55 422.08 L294.14 423.19 L294.77 424.30 L295.43 425.35 L296.12 426.28 L296.83 427.05 L297.56 427.61 L298.30 427.90 L298.97 427.92 L299.67 427.75 L300.39 427.42 L301.13 426.96 L301.86 426.41 L302.60 425.79 L303.31 425.15 L304.00 424.50 L304.88 423.62 L305.73 422.65 L306.55 421.60 L307.37 420.45 L308.17 419.21 L308.97 417.85 L309.78 416.39 L310.60 414.80 L312.06 411.58 L313.57 407.74 L315.09 403.46 L316.61 398.91 L318.10 394.26 L319.54 389.70 L320.92 385.38 L322.20 381.50 L323.12 378.83 L324.00 376.30 L324.85 373.87 L325.67 371.52 L326.46 369.19 L327.22 366.86 L327.97 364.47 L328.70 362.00 L329.44 359.37 L330.16 356.77 L330.85 354.16 L331.51 351.52 L332.16 348.82 L332.79 346.02 L333.40 343.09 L334.00 340.00 L334.79 335.54 L335.55 330.72 L336.29 325.64 L337.00 320.41 L337.67 315.12 L338.29 309.89 L338.87 304.81 L339.40 300.00 L339.79 296.12 L340.12 292.44 L340.41 288.88 L340.67 285.36 L340.92 281.80 L341.18 278.11 L341.47 274.20 L341.80 270.00 L342.36 263.44 L343.00 256.20 L343.68 248.50 L344.39 240.56 L345.10 232.62 L345.77 224.89 L346.38 217.61 L346.90 211.00 L347.22 206.69 L347.51 202.69 L347.78 198.91 L348.03 195.25 L348.26 191.62 L348.48 187.93 L348.69 184.08 L348.90 180.00 L349.14 174.75 L349.36 169.24 L349.57 163.56 L349.76 157.77 L349.94 151.94 L350.13 146.16 L350.31 140.49 L350.50 135.00 L350.64 130.24 L350.71 125.69 L350.76 121.26 L350.82 116.86 L350.93 112.37 L351.12 107.72 L351.43 102.79 L351.90 97.50 L352.89 88.07 L354.20 76.43 L355.77 63.64 L357.50 50.78 L359.34 38.92 L361.20 29.12 L363.01 22.46 L364.70 20.00 L366.38 22.46 L368.18 29.12 L370.03 38.92 L371.85 50.78 L373.58 63.64 L375.15 76.43 L376.48 88.07 L377.50 97.50 L378.00 102.79 L378.36 107.72 L378.60 112.37 L378.77 116.86 L378.89 121.26 L379.00 125.69 L379.12 130.24 L379.30 135.00 L379.53 140.49 L379.75 146.16 L379.97 151.94 L380.19 157.77 L380.40 163.56 L380.63 169.24 L380.86 174.75 L381.10 180.00 L381.30 184.08 L381.48 187.93 L381.66 191.62 L381.85 195.25 L382.06 198.91 L382.30 202.69 L382.57 206.69 L382.90 211.00 L383.47 217.61 L384.19 224.89 L385.00 232.62 L385.85 240.56 L386.70 248.49 L387.51 256.20 L388.22 263.44 L388.80 270.00 L389.10 274.25 L389.32 278.27 L389.49 282.11 L389.64 285.81 L389.80 289.40 L389.99 292.94 L390.25 296.46 L390.60 300.00 L391.00 303.24 L391.46 306.42 L391.95 309.56 L392.49 312.66 L393.05 315.74 L393.62 318.81 L394.21 321.90 L394.80 325.00 L395.38 328.12 L395.96 331.21 L396.54 334.30 L397.15 337.38 L397.79 340.49 L398.46 343.62 L399.20 346.78 L400.00 350.00 L400.94 353.68 L401.90 357.48 L402.91 361.36 L403.99 365.25 L405.15 369.11 L406.40 372.89 L407.78 376.54 L409.30 380.00 L410.83 383.04 L412.48 386.02 L414.24 388.93 L416.09 391.76 L417.99 394.47 L419.92 397.06 L421.87 399.51 L423.80 401.80 L425.43 403.61 L427.14 405.42 L428.91 407.17 L430.67 408.82 L432.40 410.32 L434.04 411.61 L435.56 412.66 L436.90 413.40 L437.48 413.65 L438.03 413.86 L438.55 414.01 L439.05 414.10 L439.53 414.15 L440.01 414.15 L440.50 414.10 L441.00 414.00 L441.62 413.73 L442.23 413.26 L442.85 412.68 L443.46 412.04 L444.07 411.43 L444.68 410.93 L445.29 410.59 L445.90 410.50 L446.58 410.75 L447.22 411.32 L447.85 412.11 L448.49 413.03 L449.14 414.00 L449.84 414.93 L450.58 415.73 L451.40 416.30 L452.39 416.69 L453.51 416.96 L454.72 417.14 L455.96 417.24 L457.17 417.30 L458.30 417.33 L459.29 417.36 L460.10 417.40 L460.40 417.43 L460.67 417.44 L460.91 417.46 L461.14 417.47 L461.35 417.47 L461.56 417.48 L461.77 417.49 L462.00 417.50" fill="none" stroke="#6aacdc" stroke-width="2"/><rect x="82" y="96.5" width="379" height="2" fill="#f0f0f4"/><rect x="81" y="97" width="2" height="417" fill="#e0e0ea"/><rect x="81" y="512.5" width="380" height="2" fill="#e8e8f0"/></svg>
<div class="t" style="left:70.10px;top:509px;font-size:11.5px;color:#f2f2f2;transform:scaleX(0.844);">0</div>
<div class="t" style="left:70.10px;top:433px;font-size:11.5px;color:#f2f2f2;transform:scaleX(0.844);">5</div>
<div class="t" style="left:64.70px;top:357px;font-size:11.5px;color:#f2f2f2;transform:scaleX(0.844);">10</div>
<div class="t" style="left:64.70px;top:281px;font-size:11.5px;color:#f2f2f2;transform:scaleX(0.844);">15</div>
<div class="t" style="left:64.70px;top:205px;font-size:11.5px;color:#f2f2f2;transform:scaleX(0.844);">20</div>
<div class="t" style="left:64.70px;top:131px;font-size:11.5px;color:#f2f2f2;transform:scaleX(0.844);">25</div>
<div class="t" style="left:65.88px;top:520px;font-size:12px;color:#5aaee0;font-weight:bold;">Ω</div>
<div class="t" style="left:126.81px;top:521px;font-size:11.5px;color:#f2f2f2;transform:scaleX(0.840);">2</div>
<div class="t" style="left:192.12px;top:521px;font-size:11.5px;color:#f2f2f2;transform:scaleX(0.840);">5</div>
<div class="t" style="left:238.83px;top:521px;font-size:11.5px;color:#f2f2f2;transform:scaleX(0.840);">10</div>
<div class="t" style="left:288.23px;top:521px;font-size:11.5px;color:#f2f2f2;transform:scaleX(0.840);">20</div>
<div class="t" style="left:353.53px;top:521px;font-size:11.5px;color:#f2f2f2;transform:scaleX(0.840);">50</div>
<div class="t" style="left:400.24px;top:521px;font-size:11.5px;color:#f2f2f2;transform:scaleX(0.840);">100</div>
<div class="t" style="left:449.64px;top:521px;font-size:11.5px;color:#f2f2f2;transform:scaleX(0.840);">200</div>
<div class="r" style="left:0px;top:64px;width:50px;height:610px;background:#2b2b2b;"></div>
<div class="r" style="left:3px;top:64px;width:14px;height:605px;box-sizing:border-box;background:#000;border:1px solid #9a9aa6;border-top:none"></div>
<div class="r" style="left:30px;top:64px;width:14px;height:605px;box-sizing:border-box;background:#000;border:1px solid #9a9aa6;border-top:none"></div>
<div class="r" style="left:4px;top:660px;width:12px;height:8px;background:#0a5a14;"></div>
<div class="r" style="left:4px;top:603px;width:12px;height:1px;background:#c8a040;"></div>
<div class="t" style="left:7.22px;top:658px;font-size:10px;color:#ffffff;font-weight:bold;">1</div>
<div class="t" style="left:34.22px;top:658px;font-size:10px;color:#ffffff;font-weight:bold;">2</div>
<div class="t" style="left:18.95px;top:664px;font-size:7px;color:#c8c8c8;transform:scaleX(0.840);">-96</div>
<div class="t" style="left:18.95px;top:628px;font-size:7px;color:#c8c8c8;transform:scaleX(0.840);">-90</div>
<div class="t" style="left:18.95px;top:592px;font-size:7px;color:#c8c8c8;transform:scaleX(0.840);">-84</div>
<div class="t" style="left:18.95px;top:556px;font-size:7px;color:#c8c8c8;transform:scaleX(0.840);">-78</div>
<div class="t" style="left:18.95px;top:520px;font-size:7px;color:#c8c8c8;transform:scaleX(0.840);">-72</div>
<div class="t" style="left:18.95px;top:484px;font-size:7px;color:#c8c8c8;transform:scaleX(0.840);">-66</div>
<div class="t" style="left:18.95px;top:448px;font-size:7px;color:#c8c8c8;transform:scaleX(0.840);">-60</div>
<div class="t" style="left:18.95px;top:412px;font-size:7px;color:#c8c8c8;transform:scaleX(0.840);">-54</div>
<div class="t" style="left:18.95px;top:376px;font-size:7px;color:#c8c8c8;transform:scaleX(0.840);">-48</div>
<div class="t" style="left:18.95px;top:340px;font-size:7px;color:#c8c8c8;transform:scaleX(0.840);">-42</div>
<div class="t" style="left:18.95px;top:304px;font-size:7px;color:#c8c8c8;transform:scaleX(0.840);">-36</div>
<div class="r" style="left:17px;top:650px;width:2px;height:1px;background:#bbb;"></div>
<div class="r" style="left:28px;top:650px;width:2px;height:1px;background:#bbb;"></div>
<div class="r" style="left:17px;top:614px;width:2px;height:1px;background:#bbb;"></div>
<div class="r" style="left:28px;top:614px;width:2px;height:1px;background:#bbb;"></div>
<div class="r" style="left:17px;top:578px;width:2px;height:1px;background:#bbb;"></div>
<div class="r" style="left:28px;top:578px;width:2px;height:1px;background:#bbb;"></div>
<div class="r" style="left:17px;top:542px;width:2px;height:1px;background:#bbb;"></div>
<div class="r" style="left:28px;top:542px;width:2px;height:1px;background:#bbb;"></div>
<div class="r" style="left:17px;top:506px;width:2px;height:1px;background:#bbb;"></div>
<div class="r" style="left:28px;top:506px;width:2px;height:1px;background:#bbb;"></div>
<div class="r" style="left:17px;top:470px;width:2px;height:1px;background:#bbb;"></div>
<div class="r" style="left:28px;top:470px;width:2px;height:1px;background:#bbb;"></div>
<div class="r" style="left:17px;top:434px;width:2px;height:1px;background:#bbb;"></div>
<div class="r" style="left:28px;top:434px;width:2px;height:1px;background:#bbb;"></div>
<div class="r" style="left:17px;top:398px;width:2px;height:1px;background:#bbb;"></div>
<div class="r" style="left:28px;top:398px;width:2px;height:1px;background:#bbb;"></div>
<div class="r" style="left:17px;top:362px;width:2px;height:1px;background:#bbb;"></div>
<div class="r" style="left:28px;top:362px;width:2px;height:1px;background:#bbb;"></div>
<div class="r" style="left:17px;top:326px;width:2px;height:1px;background:#bbb;"></div>
<div class="r" style="left:28px;top:326px;width:2px;height:1px;background:#bbb;"></div>
<div class="r" style="left:17px;top:290px;width:2px;height:1px;background:#bbb;"></div>
<div class="r" style="left:28px;top:290px;width:2px;height:1px;background:#bbb;"></div>
<div class="r" style="left:50px;top:536px;width:411px;height:20px;background:#2e2e2e;"></div>
<div class="r" style="left:50px;top:535px;width:411px;height:1px;background:#3c3c3c;"></div>
<div class="r" style="left:52px;top:536px;width:53px;height:16px;box-sizing:border-box;background:#3c3c3c;border:1px solid #4a4a4a;border-radius:1px"></div>
<div class="t" style="left:58.00px;top:541px;font-size:9px;color:#f0f0f0;transform:scaleX(0.921);">Impedance</div>
<div class="r" style="left:106px;top:537px;width:41px;height:13px;box-sizing:border-box;background:#333;border:1px solid #454545;border-radius:1px"></div>
<div class="t" style="left:112.00px;top:541px;font-size:9px;color:#e8e8e8;transform:scaleX(0.866);">Nyquist</div>
<div class="r" style="left:148px;top:537px;width:54px;height:13px;box-sizing:border-box;background:#333;border:1px solid #454545;border-radius:1px"></div>
<div class="t" style="left:155.00px;top:541px;font-size:9px;color:#e8e8e8;transform:scaleX(0.800);">Thiele-Small</div>
<div class="r" style="left:58px;top:549px;width:3px;height:1px;background:#ccc;"></div>
<div class="r" style="left:112px;top:549px;width:4px;height:1px;background:#ccc;"></div>
<div class="r" style="left:155px;top:549px;width:4px;height:1px;background:#ccc;"></div>
<div class="r" style="left:50px;top:556px;width:411px;height:107px;background:#a5a5a5;"></div>
<div class="r" style="left:50px;top:663px;width:411px;height:10px;background:#3a3a3a;"></div>
<div class="r" style="left:50px;top:663px;width:411px;height:1px;background:#2a2a2a;"></div>
<div class="r" style="left:64px;top:664px;width:397px;height:1px;background:#4a4a4a;"></div>
<div class="r" style="left:50px;top:672px;width:411px;height:1px;background:#484848;"></div>
<div class="r" style="left:50px;top:664px;width:14px;height:8px;background:#333;"></div>
<svg class="r" style="left:53px;top:664px" width="6" height="8"><path d="M5 0.5v7l-4-3.5z" fill="#ccc"/></svg>
<div class="r" style="left:0px;top:673px;width:461px;height:63px;background:#2d2d2d;"></div>
<div class="t" style="left:2.00px;top:681px;font-size:9px;color:#e6e6e6;transform:scaleX(0.836);">Impedance Measurements: C:/.../BMS 12s305 8/80 liter BMS 12s305 8 i Basreflex.IMF</div>
<div class="r" style="left:16px;top:692px;width:29px;height:11px;box-sizing:border-box;background:#3a3a3a;border:1px solid #4c4c4c;border-radius:1px"></div>
<div class="t" style="left:18.00px;top:694px;font-size:9px;color:#eeeeee;transform:scaleX(0.780);">Show▼</div>
<div class="r" style="left:48px;top:692px;width:29px;height:11px;box-sizing:border-box;background:#3a3a3a;border:1px solid #4c4c4c;border-radius:1px"></div>
<div class="t" style="left:50.00px;top:694px;font-size:9px;color:#eeeeee;transform:scaleX(0.836);">▼Proc.</div>
<div class="r" style="left:82px;top:692px;width:52px;height:11px;box-sizing:border-box;background:#3a3a3a;border:1px solid #4c4c4c;border-radius:1px"></div>
<div class="t" style="left:84.00px;top:694px;font-size:9px;color:#eeeeee;transform:scaleX(0.815);">Proc. Menu</div>
<svg class="r" style="left:124px;top:694px" width="7" height="8"><path d="M0.5 0.5l6 3.5-6 3.5z" fill="#eeeeee"/></svg>
<div class="r" style="left:1px;top:705px;width:460px;height:15px;background:#2f83dc;"></div>
<div class="t" style="left:15.00px;top:709px;font-size:9px;color:#d8e8ff;">1</div>
<svg class="r" style="left:20px;top:707px" width="12" height="12"><circle cx="5.5" cy="6" r="4.8" fill="#0b1a2e"/><circle cx="5.5" cy="6" r="1.8" fill="#dfe8f0"/></svg>
<div class="r" style="left:35px;top:708px;width:10px;height:10px;background:#0b1a2e;"></div>
<svg class="r" style="left:36px;top:709px" width="9" height="9"><path d="M1.5 4.5l2 2.5 4-6" fill="none" stroke="#fff" stroke-width="1.6"/></svg>
<div class="r" style="left:49px;top:708px;width:10px;height:10px;background:#0b1a2e;"></div>
<div class="r" style="left:63px;top:705px;width:161px;height:15px;background:#0a0f16;"></div>
<div class="t" style="left:64.00px;top:709px;font-size:9px;color:#f0f0f0;transform:scaleX(0.836);">ported Impedance Data 80 liter BMS i Basreflex</div>
<div class="r" style="left:225px;top:706px;width:19px;height:13px;box-sizing:border-box;background:#3a4a5a;border:1px solid #4a5a70;border-radius:2px"></div>
<div class="t" style="left:228.00px;top:709px;font-size:9px;color:#f0f0f0;transform:scaleX(0.899);">Info</div>
<div class="r" style="left:244px;top:706px;width:28px;height:13px;box-sizing:border-box;background:#3a4a5a;border:1px solid #4a5a70;border-radius:2px"></div>
<div class="t" style="left:245.50px;top:709px;font-size:9px;color:#f0f0f0;transform:scaleX(0.961);">Export</div>
<div class="r" style="left:272px;top:706px;width:19px;height:13px;box-sizing:border-box;background:#3a4a5a;border:1px solid #4a5a70;border-radius:2px"></div>
<div class="t" style="left:274.50px;top:709px;font-size:9px;color:#f0f0f0;transform:scaleX(0.963);">Del</div>
<div class="r" style="left:0px;top:720px;width:461px;height:16px;background:#262626;"></div>
<div class="r" style="left:0px;top:736px;width:461px;height:20px;background:#2f2f2f;"></div>
<div class="r" style="left:461px;top:736px;width:883px;height:20px;background:#2a2a2a;"></div>
<div class="r" style="left:460px;top:64px;width:1px;height:672px;background:#262626;"></div>
<div class="t" style="left:4.00px;top:743px;font-size:9px;color:#e8e8e8;transform:scaleX(0.867);">f: 21.983Hz, Z: 5.629Ω, Ph: 9.473°, L: 6.70732mH</div>
<div class="r" style="left:34px;top:754px;width:201px;height:2px;background:#f4f4f4;"></div>
<div class="r" style="left:580px;top:754px;width:33px;height:2px;background:#5a5a5a;"></div>
<div class="r" style="left:0px;top:63px;width:172px;height:18px;background:#ffffff;"></div>
<div class="t" style="left:-1.00px;top:67px;font-size:9px;color:#8c8c8c;transform:scaleX(0.870);">SPL Meter</div>
<div class="r" style="left:158px;top:64px;width:13px;height:15px;background:#e2e2e2;"></div>
<div class="r" style="left:0px;top:81px;width:172px;height:197px;background:#333333;"></div>
<div class="r" style="left:4px;top:87px;width:161px;height:120px;box-sizing:border-box;background:#2c2c2c;border:1px solid #3d3d3d"></div>
<div class="t" style="left:8.70px;top:96px;font-size:12px;color:#f4f4f4;font-weight:bold;transform:scaleX(0.930);">LCF:</div>
<div class="t" style="left:89.70px;top:96px;font-size:12px;color:#30d838;font-weight:bold;transform:scaleX(1.122);">44.7</div>
<div class="t" style="left:8.70px;top:111px;font-size:12px;color:#f4f4f4;font-weight:bold;transform:scaleX(0.988);">LCF max:</div>
<div class="t" style="left:89.70px;top:111px;font-size:12px;color:#30d838;font-weight:bold;transform:scaleX(1.177);">111.9</div>
<div class="t" style="left:8.70px;top:134px;font-size:12px;color:#f4f4f4;font-weight:bold;transform:scaleX(0.991);">LCpeak:</div>
<div class="t" style="left:89.70px;top:134px;font-size:12px;color:#30d838;font-weight:bold;transform:scaleX(1.122);">54.4</div>
<div class="t" style="left:8.70px;top:148px;font-size:12px;color:#f4f4f4;font-weight:bold;">LCpeak max:</div>
<div class="t" style="left:89.70px;top:148px;font-size:12px;color:#30d838;font-weight:bold;transform:scaleX(1.136);">120.2</div>
<div class="t" style="left:8.70px;top:170px;font-size:12px;color:#f4f4f4;font-weight:bold;transform:scaleX(0.968);">LCeq:</div>
<div class="t" style="left:89.70px;top:170px;font-size:12px;color:#30d838;font-weight:bold;transform:scaleX(1.122);">96.0</div>
<div class="t" style="left:8.70px;top:184px;font-size:12px;color:#f4f4f4;font-weight:bold;transform:scaleX(1.043);">Duration:</div>
<div class="t" style="left:89.70px;top:184px;font-size:12px;color:#48d0e0;font-weight:bold;transform:scaleX(1.099);">47m42s</div>
<div class="t" style="left:13.80px;top:217px;font-size:9px;color:#e8e8e8;transform:scaleX(0.851);">Input channel</div>
<div class="r" style="left:67px;top:214px;width:41px;height:14px;box-sizing:border-box;background:#3a3a3a;border:1px solid #4a4a4a;border-radius:2px"></div>
<div class="t" style="left:70.50px;top:217px;font-size:9px;color:#f0f0f0;">1</div>
<svg class="r" style="left:96px;top:219px" width="7" height="4"><path d="M0 0h7l-3.5 4z" fill="#d8d8d8"/></svg>
<div class="r" style="left:116px;top:214px;width:48px;height:15px;box-sizing:border-box;background:#383838;border:1px solid #4c4c4c;border-radius:2px"></div>
<div class="t" style="left:121.60px;top:217px;font-size:9px;color:#f0f0f0;transform:scaleX(0.846);">Reset Max</div>
<div class="r" style="left:144px;top:226px;width:6px;height:1px;background:#ddd;"></div>
<div class="t" style="left:21.80px;top:238px;font-size:9px;color:#e8e8e8;transform:scaleX(0.893);">Integration</div>
<div class="r" style="left:67px;top:235px;width:41px;height:14px;box-sizing:border-box;background:#3a3a3a;border:1px solid #4a4a4a;border-radius:2px"></div>
<div class="t" style="left:69.60px;top:239px;font-size:9px;color:#f0f0f0;transform:scaleX(0.773);">FAST</div>
<svg class="r" style="left:96px;top:240px" width="7" height="4"><path d="M0 0h7l-3.5 4z" fill="#d8d8d8"/></svg>
<div class="t" style="left:29.20px;top:259px;font-size:9px;color:#e8e8e8;transform:scaleX(0.819);">Weighing</div>
<div class="r" style="left:67px;top:256px;width:41px;height:14px;box-sizing:border-box;background:#3a3a3a;border:1px solid #4a4a4a;border-radius:2px"></div>
<div class="t" style="left:69.60px;top:259px;font-size:9px;color:#f0f0f0;">C</div>
<svg class="r" style="left:96px;top:261px" width="7" height="4"><path d="M0 0h7l-3.5 4z" fill="#d8d8d8"/></svg>
<div class="r" style="left:116px;top:256px;width:48px;height:15px;box-sizing:border-box;background:#383838;border:1px solid #4c4c4c;border-radius:2px"></div>
<div class="t" style="left:126.50px;top:259px;font-size:9px;color:#f0f0f0;transform:scaleX(0.900);">Restart</div>
<div class="r" style="left:126px;top:268px;width:5px;height:1px;background:#ddd;"></div>
<div class="r" style="left:172px;top:81px;width:1px;height:197px;background:#262626;"></div>
<div class="r" style="left:4px;top:284px;width:147px;height:18px;background:#ffffff;"></div>
<div class="t" style="left:6.50px;top:289px;font-size:9px;color:#8c8c8c;transform:scaleX(0.922);">Function Generator</div>
<div class="r" style="left:137px;top:286px;width:13px;height:13px;background:#e2e2e2;"></div>
<div class="r" style="left:4px;top:302px;width:147px;height:108px;background:#333333;"></div>
<div class="r" style="left:12px;top:309px;width:132px;height:14px;box-sizing:border-box;background:#3a3a3a;border:1px solid #474747;border-radius:2px"></div>
<div class="t" style="left:14.30px;top:313px;font-size:9px;color:#f0f0f0;transform:scaleX(0.816);">Sine wave</div>
<svg class="r" style="left:132px;top:314px" width="7" height="4"><path d="M0 0h7l-3.5 4z" fill="#d8d8d8"/></svg>
<div class="t" style="left:38.70px;top:333px;font-size:9px;color:#e8e8e8;transform:scaleX(0.840);">Frequency</div>
<div class="r" style="left:82px;top:331px;width:53px;height:13px;background:#151515;"></div>
<div class="t" style="left:84.80px;top:334px;font-size:9px;color:#f2f2f2;transform:scaleX(0.808);">22,00Hz</div>
<div class="r" style="left:135px;top:331px;width:10px;height:13px;box-sizing:border-box;background:#3a3a3a;border:1px solid #444;border-radius:1px"></div><svg class="r" style="left:137px;top:333px" width="6" height="9"><path d="M0.5 3.5l2.5-3 2.5 3z M0.5 5l2.5 3 2.5-3z" fill="#cfcfcf"/></svg>
<div class="t" style="left:11.90px;top:354px;font-size:9px;color:#ececec;transform:scaleX(0.833);">Out Level</div>
<div class="r" style="left:50px;top:352px;width:47px;height:13px;background:#151515;"></div>
<div class="r" style="left:53px;top:353px;width:18.4px;height:11px;background:#2a6ecb;"></div>
<div class="t" style="left:53.00px;top:355px;font-size:9px;color:#f2f2f2;transform:scaleX(0.816);">-2,00dBFS</div>
<div class="r" style="left:97px;top:352px;width:10px;height:13px;box-sizing:border-box;background:#3a3a3a;border:1px solid #444;border-radius:1px"></div><svg class="r" style="left:99px;top:354px" width="6" height="9"><path d="M0.5 3.5l2.5-3 2.5 3z M0.5 5l2.5 3 2.5-3z" fill="#cfcfcf"/></svg>
<div class="r" style="left:110px;top:351px;width:34px;height:14px;box-sizing:border-box;background:#3a3a3a;border:1px solid #474747;border-radius:2px"></div>
<div class="t" style="left:111.90px;top:355px;font-size:9px;color:#f0f0f0;transform:scaleX(0.769);">dBFS</div>
<svg class="r" style="left:132px;top:356px" width="7" height="4"><path d="M0 0h7l-3.5 4z" fill="#d8d8d8"/></svg>
<div class="t" style="left:13.10px;top:373px;font-size:9px;color:#6e6e6e;transform:scaleX(0.775);">Amp Gain</div>
<div class="r" style="left:50px;top:371px;width:47px;height:13px;background:#1c1c1c;"></div>
<div class="t" style="left:52.60px;top:373px;font-size:9px;color:#7a7a7a;transform:scaleX(0.847);">0,00dBg</div>
<div class="r" style="left:97px;top:371px;width:10px;height:13px;box-sizing:border-box;background:#3a3a3a;border:1px solid #444;border-radius:1px"></div><svg class="r" style="left:99px;top:373px" width="6" height="9"><path d="M0.5 3.5l2.5-3 2.5 3z M0.5 5l2.5 3 2.5-3z" fill="#5a5a5a"/></svg>
<div class="r" style="left:12px;top:392px;width:9px;height:9px;background:#0c0c0c;"></div>
<svg class="r" style="left:12px;top:392px" width="9" height="9"><path d="M1.5 4.5l2 2.5 4-6" fill="none" stroke="#f4f4f4" stroke-width="1.6"/></svg>
<div class="t" style="left:25.00px;top:393px;font-size:9px;color:#f0f0f0;transform:scaleX(0.759);">1/L</div>
<div class="r" style="left:43px;top:392px;width:9px;height:9px;background:#0c0c0c;"></div>
<svg class="r" style="left:43px;top:392px" width="9" height="9"><path d="M1.5 4.5l2 2.5 4-6" fill="none" stroke="#f4f4f4" stroke-width="1.6"/></svg>
<div class="t" style="left:56.00px;top:393px;font-size:9px;color:#f0f0f0;transform:scaleX(0.828);">2/R</div>
<div class="r" style="left:124px;top:387px;width:21px;height:15px;box-sizing:border-box;background:#3a3a3a;border:1px solid #4a4a4a;border-radius:2px"></div>
<svg class="r" style="left:129px;top:390px" width="11" height="10"><rect x="0" y="0.5" width="2" height="9" fill="#f4f4f4"/><path d="M4 0.5l6 4.5-6 4.5z" fill="#f4f4f4"/></svg>
<div class="r" style="left:151px;top:302px;width:1px;height:108px;background:#262626;"></div>
<div class="r" style="left:461px;top:13px;width:883px;height:723px;background:#333333;"></div>
<div class="r" style="left:455px;top:7px;width:889px;height:6px;background:linear-gradient(rgba(0,0,0,0),rgba(0,0,0,0.09))"></div>
<div class="r" style="left:1259px;top:7px;width:8px;height:1px;background:#222;"></div>
<svg class="r" style="left:1289px;top:1px" width="12" height="11"><path d="M2.5 4.5h5v5h-5z M4.5 4.5v-2h5v5h-2" fill="none" stroke="#222" stroke-width="1"/></svg>
<svg class="r" style="left:1322px;top:2px" width="11" height="11"><path d="M1.5 1.5l7 7M8.5 1.5l-7 7" stroke="#222" stroke-width="1"/></svg>
<div class="r" style="left:461px;top:13px;width:883px;height:22px;background:#ffffff;"></div>
<div class="t" style="left:466.50px;top:21px;font-size:9px;color:#8a8a8a;transform:scaleX(0.876);">Real-Time Analyzer (RTA)</div>
<div class="r" style="left:461px;top:35px;width:883px;height:22px;background:#343434;"></div>
<div class="r" style="left:461px;top:57px;width:883px;height:1px;background:#262626;"></div>
<div class="r" style="left:468px;top:38px;width:16px;height:16px;box-sizing:border-box;background:#353535;border:1px solid #474747;border-radius:2px"></div>
<svg class="r" style="left:471px;top:41px" width="11" height="10"><rect x="0" y="0.5" width="2" height="9" fill="#f4f4f4"/><path d="M4 0.5l6 4.5-6 4.5z" fill="#f4f4f4"/></svg>
<div class="t" style="left:490.70px;top:43px;font-size:9px;color:#e8e8e8;transform:scaleX(0.913);">Ch</div>
<div class="r" style="left:504px;top:39px;width:34px;height:14px;box-sizing:border-box;background:#3a3a3a;border:1px solid #4a4a4a;border-radius:2px"></div><div class="t" style="left:508.00px;top:43px;font-size:9px;color:#f0f0f0;">1</div><svg class="r" style="left:526px;top:44.0px" width="7" height="4"><path d="M0 0h7l-3.5 4z" fill="#d8d8d8"/></svg>
<div class="t" style="left:543.60px;top:43px;font-size:9px;color:#e8e8e8;transform:scaleX(0.815);">PPO</div>
<div class="r" style="left:561px;top:39px;width:35px;height:14px;box-sizing:border-box;background:#3a3a3a;border:1px solid #4a4a4a;border-radius:2px"></div><div class="t" style="left:565.00px;top:43px;font-size:9px;color:#f0f0f0;">12</div><svg class="r" style="left:584px;top:44.0px" width="7" height="4"><path d="M0 0h7l-3.5 4z" fill="#d8d8d8"/></svg>
<div class="t" style="left:601.60px;top:43px;font-size:9px;color:#e8e8e8;transform:scaleX(0.879);">Integration</div>
<div class="r" style="left:643px;top:39px;width:49px;height:14px;box-sizing:border-box;background:#3a3a3a;border:1px solid #4a4a4a;border-radius:2px"></div><div class="t" style="left:647.00px;top:43px;font-size:9px;color:#f0f0f0;">Infinite</div><svg class="r" style="left:680px;top:44.0px" width="7" height="4"><path d="M0 0h7l-3.5 4z" fill="#d8d8d8"/></svg>
<div class="t" style="left:697.70px;top:43px;font-size:9px;color:#e8e8e8;transform:scaleX(0.811);">Weighing</div>
<div class="r" style="left:733px;top:39px;width:34px;height:14px;box-sizing:border-box;background:#3a3a3a;border:1px solid #4a4a4a;border-radius:2px"></div><div class="t" style="left:737.00px;top:43px;font-size:9px;color:#f0f0f0;">Z</div><svg class="r" style="left:755px;top:44.0px" width="7" height="4"><path d="M0 0h7l-3.5 4z" fill="#d8d8d8"/></svg>
<div class="t" style="left:773.80px;top:43px;font-size:9px;color:#e8e8e8;transform:scaleX(0.821);">Scale top</div>
<div class="r" style="left:809px;top:39px;width:48px;height:14px;box-sizing:border-box;background:#3a3a3a;border:1px solid #4a4a4a;border-radius:2px"></div><div class="t" style="left:813.00px;top:43px;font-size:9px;color:#f0f0f0;">120dB</div><svg class="r" style="left:845px;top:44.0px" width="7" height="4"><path d="M0 0h7l-3.5 4z" fill="#d8d8d8"/></svg>
<div class="t" style="left:862.50px;top:43px;font-size:9px;color:#e8e8e8;transform:scaleX(0.811);">Range</div>
<div class="r" style="left:889px;top:39px;width:48px;height:14px;box-sizing:border-box;background:#3a3a3a;border:1px solid #4a4a4a;border-radius:2px"></div><div class="t" style="left:893.00px;top:43px;font-size:9px;color:#f0f0f0;">100dB</div><svg class="r" style="left:925px;top:44.0px" width="7" height="4"><path d="M0 0h7l-3.5 4z" fill="#d8d8d8"/></svg>
<div class="r" style="left:944px;top:38px;width:21px;height:16px;box-sizing:border-box;background:#353535;border:1px solid #474747;border-radius:2px"></div>
<svg class="r" style="left:948px;top:41px" width="13" height="10"><rect x="0.5" y="2" width="12" height="7.5" fill="#111" stroke="#ddd" stroke-width="0.8"/><rect x="4" y="0.5" width="5" height="2" fill="#ddd"/><circle cx="6.5" cy="6" r="2.3" fill="#111" stroke="#eee" stroke-width="1"/></svg>
<svg class="r" style="left:0;top:0" width="1344" height="756"><rect x="503" y="70.5" width="841" height="639" fill="#212121"/><line x1="545.50" y1="71" x2="545.50" y2="709" stroke="#686868" stroke-width="1"/><line x1="606.50" y1="71" x2="606.50" y2="709" stroke="#4c4c4c" stroke-width="1"/><line x1="650.50" y1="71" x2="650.50" y2="709" stroke="#4c4c4c" stroke-width="1"/><line x1="683.50" y1="71" x2="683.50" y2="709" stroke="#686868" stroke-width="1"/><line x1="711.50" y1="71" x2="711.50" y2="709" stroke="#4c4c4c" stroke-width="1"/><line x1="734.50" y1="71" x2="734.50" y2="709" stroke="#4c4c4c" stroke-width="1"/><line x1="754.50" y1="71" x2="754.50" y2="709" stroke="#4c4c4c" stroke-width="1"/><line x1="772.50" y1="71" x2="772.50" y2="709" stroke="#4c4c4c" stroke-width="1"/><line x1="788.50" y1="71" x2="788.50" y2="709" stroke="#686868" stroke-width="1"/><line x1="849.50" y1="71" x2="849.50" y2="709" stroke="#4c4c4c" stroke-width="1"/><line x1="892.50" y1="71" x2="892.50" y2="709" stroke="#686868" stroke-width="1"/><line x1="954.50" y1="71" x2="954.50" y2="709" stroke="#4c4c4c" stroke-width="1"/><line x1="997.50" y1="71" x2="997.50" y2="709" stroke="#4c4c4c" stroke-width="1"/><line x1="1031.50" y1="71" x2="1031.50" y2="709" stroke="#686868" stroke-width="1"/><line x1="1058.50" y1="71" x2="1058.50" y2="709" stroke="#4c4c4c" stroke-width="1"/><line x1="1081.50" y1="71" x2="1081.50" y2="709" stroke="#4c4c4c" stroke-width="1"/><line x1="1101.50" y1="71" x2="1101.50" y2="709" stroke="#4c4c4c" stroke-width="1"/><line x1="1119.50" y1="71" x2="1119.50" y2="709" stroke="#4c4c4c" stroke-width="1"/><line x1="1135.50" y1="71" x2="1135.50" y2="709" stroke="#686868" stroke-width="1"/><line x1="1196.50" y1="71" x2="1196.50" y2="709" stroke="#4c4c4c" stroke-width="1"/><line x1="1240.50" y1="71" x2="1240.50" y2="709" stroke="#686868" stroke-width="1"/><line x1="1301.50" y1="71" x2="1301.50" y2="709" stroke="#4c4c4c" stroke-width="1"/><line x1="504" y1="645.50" x2="1344" y2="645.50" stroke="#595959" stroke-width="1"/><line x1="504" y1="581.50" x2="1344" y2="581.50" stroke="#595959" stroke-width="1"/><line x1="504" y1="517.50" x2="1344" y2="517.50" stroke="#595959" stroke-width="1"/><line x1="504" y1="453.50" x2="1344" y2="453.50" stroke="#595959" stroke-width="1"/><line x1="504" y1="389.50" x2="1344" y2="389.50" stroke="#595959" stroke-width="1"/><line x1="504" y1="325.50" x2="1344" y2="325.50" stroke="#595959" stroke-width="1"/><line x1="504" y1="262.50" x2="1344" y2="262.50" stroke="#595959" stroke-width="1"/><line x1="504" y1="198.50" x2="1344" y2="198.50" stroke="#595959" stroke-width="1"/><line x1="504" y1="133.50" x2="1344" y2="133.50" stroke="#595959" stroke-width="1"/><line x1="496.5" y1="709.50" x2="503" y2="709.50" stroke="#d8d8e0" stroke-width="1"/><line x1="498.5" y1="703.50" x2="503" y2="703.50" stroke="#d8d8e0" stroke-width="1"/><line x1="498.5" y1="696.50" x2="503" y2="696.50" stroke="#d8d8e0" stroke-width="1"/><line x1="498.5" y1="690.50" x2="503" y2="690.50" stroke="#d8d8e0" stroke-width="1"/><line x1="498.5" y1="683.50" x2="503" y2="683.50" stroke="#d8d8e0" stroke-width="1"/><line x1="498.5" y1="677.50" x2="503" y2="677.50" stroke="#d8d8e0" stroke-width="1"/><line x1="498.5" y1="671.50" x2="503" y2="671.50" stroke="#d8d8e0" stroke-width="1"/><line x1="498.5" y1="664.50" x2="503" y2="664.50" stroke="#d8d8e0" stroke-width="1"/><line x1="498.5" y1="658.50" x2="503" y2="658.50" stroke="#d8d8e0" stroke-width="1"/><line x1="498.5" y1="651.50" x2="503" y2="651.50" stroke="#d8d8e0" stroke-width="1"/><line x1="496.5" y1="645.50" x2="503" y2="645.50" stroke="#d8d8e0" stroke-width="1"/><line x1="498.5" y1="639.50" x2="503" y2="639.50" stroke="#d8d8e0" stroke-width="1"/><line x1="498.5" y1="632.50" x2="503" y2="632.50" stroke="#d8d8e0" stroke-width="1"/><line x1="498.5" y1="626.50" x2="503" y2="626.50" stroke="#d8d8e0" stroke-width="1"/><line x1="498.5" y1="620.50" x2="503" y2="620.50" stroke="#d8d8e0" stroke-width="1"/><line x1="498.5" y1="613.50" x2="503" y2="613.50" stroke="#d8d8e0" stroke-width="1"/><line x1="498.5" y1="607.50" x2="503" y2="607.50" stroke="#d8d8e0" stroke-width="1"/><line x1="498.5" y1="600.50" x2="503" y2="600.50" stroke="#d8d8e0" stroke-width="1"/><line x1="498.5" y1="594.50" x2="503" y2="594.50" stroke="#d8d8e0" stroke-width="1"/><line x1="498.5" y1="588.50" x2="503" y2="588.50" stroke="#d8d8e0" stroke-width="1"/><line x1="496.5" y1="581.50" x2="503" y2="581.50" stroke="#d8d8e0" stroke-width="1"/><line x1="498.5" y1="575.50" x2="503" y2="575.50" stroke="#d8d8e0" stroke-width="1"/><line x1="498.5" y1="568.50" x2="503" y2="568.50" stroke="#d8d8e0" stroke-width="1"/><line x1="498.5" y1="562.50" x2="503" y2="562.50" stroke="#d8d8e0" stroke-width="1"/><line x1="498.5" y1="556.50" x2="503" y2="556.50" stroke="#d8d8e0" stroke-width="1"/><line x1="498.5" y1="549.50" x2="503" y2="549.50" stroke="#d8d8e0" stroke-width="1"/><line x1="498.5" y1="543.50" x2="503" y2="543.50" stroke="#d8d8e0" stroke-width="1"/><line x1="498.5" y1="536.50" x2="503" y2="536.50" stroke="#d8d8e0" stroke-width="1"/><line x1="498.5" y1="530.50" x2="503" y2="530.50" stroke="#d8d8e0" stroke-width="1"/><line x1="498.5" y1="524.50" x2="503" y2="524.50" stroke="#d8d8e0" stroke-width="1"/><line x1="496.5" y1="517.50" x2="503" y2="517.50" stroke="#d8d8e0" stroke-width="1"/><line x1="498.5" y1="511.50" x2="503" y2="511.50" stroke="#d8d8e0" stroke-width="1"/><line x1="498.5" y1="505.50" x2="503" y2="505.50" stroke="#d8d8e0" stroke-width="1"/><line x1="498.5" y1="498.50" x2="503" y2="498.50" stroke="#d8d8e0" stroke-width="1"/><line x1="498.5" y1="492.50" x2="503" y2="492.50" stroke="#d8d8e0" stroke-width="1"/><line x1="498.5" y1="485.50" x2="503" y2="485.50" stroke="#d8d8e0" stroke-width="1"/><line x1="498.5" y1="479.50" x2="503" y2="479.50" stroke="#d8d8e0" stroke-width="1"/><line x1="498.5" y1="473.50" x2="503" y2="473.50" stroke="#d8d8e0" stroke-width="1"/><line x1="498.5" y1="466.50" x2="503" y2="466.50" stroke="#d8d8e0" stroke-width="1"/><line x1="498.5" y1="460.50" x2="503" y2="460.50" stroke="#d8d8e0" stroke-width="1"/><line x1="496.5" y1="453.50" x2="503" y2="453.50" stroke="#d8d8e0" stroke-width="1"/><line x1="498.5" y1="447.50" x2="503" y2="447.50" stroke="#d8d8e0" stroke-width="1"/><line x1="498.5" y1="441.50" x2="503" y2="441.50" stroke="#d8d8e0" stroke-width="1"/><line x1="498.5" y1="434.50" x2="503" y2="434.50" stroke="#d8d8e0" stroke-width="1"/><line x1="498.5" y1="428.50" x2="503" y2="428.50" stroke="#d8d8e0" stroke-width="1"/><line x1="498.5" y1="421.50" x2="503" y2="421.50" stroke="#d8d8e0" stroke-width="1"/><line x1="498.5" y1="415.50" x2="503" y2="415.50" stroke="#d8d8e0" stroke-width="1"/><line x1="498.5" y1="409.50" x2="503" y2="409.50" stroke="#d8d8e0" stroke-width="1"/><line x1="498.5" y1="402.50" x2="503" y2="402.50" stroke="#d8d8e0" stroke-width="1"/><line x1="498.5" y1="396.50" x2="503" y2="396.50" stroke="#d8d8e0" stroke-width="1"/><line x1="496.5" y1="390.50" x2="503" y2="390.50" stroke="#d8d8e0" stroke-width="1"/><line x1="498.5" y1="383.50" x2="503" y2="383.50" stroke="#d8d8e0" stroke-width="1"/><line x1="498.5" y1="377.50" x2="503" y2="377.50" stroke="#d8d8e0" stroke-width="1"/><line x1="498.5" y1="370.50" x2="503" y2="370.50" stroke="#d8d8e0" stroke-width="1"/><line x1="498.5" y1="364.50" x2="503" y2="364.50" stroke="#d8d8e0" stroke-width="1"/><line x1="498.5" y1="358.50" x2="503" y2="358.50" stroke="#d8d8e0" stroke-width="1"/><line x1="498.5" y1="351.50" x2="503" y2="351.50" stroke="#d8d8e0" stroke-width="1"/><line x1="498.5" y1="345.50" x2="503" y2="345.50" stroke="#d8d8e0" stroke-width="1"/><line x1="498.5" y1="338.50" x2="503" y2="338.50" stroke="#d8d8e0" stroke-width="1"/><line x1="498.5" y1="332.50" x2="503" y2="332.50" stroke="#d8d8e0" stroke-width="1"/><line x1="496.5" y1="326.50" x2="503" y2="326.50" stroke="#d8d8e0" stroke-width="1"/><line x1="498.5" y1="319.50" x2="503" y2="319.50" stroke="#d8d8e0" stroke-width="1"/><line x1="498.5" y1="313.50" x2="503" y2="313.50" stroke="#d8d8e0" stroke-width="1"/><line x1="498.5" y1="306.50" x2="503" y2="306.50" stroke="#d8d8e0" stroke-width="1"/><line x1="498.5" y1="300.50" x2="503" y2="300.50" stroke="#d8d8e0" stroke-width="1"/><line x1="498.5" y1="294.50" x2="503" y2="294.50" stroke="#d8d8e0" stroke-width="1"/><line x1="498.5" y1="287.50" x2="503" y2="287.50" stroke="#d8d8e0" stroke-width="1"/><line x1="498.5" y1="281.50" x2="503" y2="281.50" stroke="#d8d8e0" stroke-width="1"/><line x1="498.5" y1="274.50" x2="503" y2="274.50" stroke="#d8d8e0" stroke-width="1"/><line x1="498.5" y1="268.50" x2="503" y2="268.50" stroke="#d8d8e0" stroke-width="1"/><line x1="496.5" y1="262.50" x2="503" y2="262.50" stroke="#d8d8e0" stroke-width="1"/><line x1="498.5" y1="255.50" x2="503" y2="255.50" stroke="#d8d8e0" stroke-width="1"/><line x1="498.5" y1="249.50" x2="503" y2="249.50" stroke="#d8d8e0" stroke-width="1"/><line x1="498.5" y1="243.50" x2="503" y2="243.50" stroke="#d8d8e0" stroke-width="1"/><line x1="498.5" y1="236.50" x2="503" y2="236.50" stroke="#d8d8e0" stroke-width="1"/><line x1="498.5" y1="230.50" x2="503" y2="230.50" stroke="#d8d8e0" stroke-width="1"/><line x1="498.5" y1="223.50" x2="503" y2="223.50" stroke="#d8d8e0" stroke-width="1"/><line x1="498.5" y1="217.50" x2="503" y2="217.50" stroke="#d8d8e0" stroke-width="1"/><line x1="498.5" y1="211.50" x2="503" y2="211.50" stroke="#d8d8e0" stroke-width="1"/><line x1="498.5" y1="204.50" x2="503" y2="204.50" stroke="#d8d8e0" stroke-width="1"/><line x1="496.5" y1="198.50" x2="503" y2="198.50" stroke="#d8d8e0" stroke-width="1"/><line x1="498.5" y1="191.50" x2="503" y2="191.50" stroke="#d8d8e0" stroke-width="1"/><line x1="498.5" y1="185.50" x2="503" y2="185.50" stroke="#d8d8e0" stroke-width="1"/><line x1="498.5" y1="179.50" x2="503" y2="179.50" stroke="#d8d8e0" stroke-width="1"/><line x1="498.5" y1="172.50" x2="503" y2="172.50" stroke="#d8d8e0" stroke-width="1"/><line x1="498.5" y1="166.50" x2="503" y2="166.50" stroke="#d8d8e0" stroke-width="1"/><line x1="498.5" y1="159.50" x2="503" y2="159.50" stroke="#d8d8e0" stroke-width="1"/><line x1="498.5" y1="153.50" x2="503" y2="153.50" stroke="#d8d8e0" stroke-width="1"/><line x1="498.5" y1="147.50" x2="503" y2="147.50" stroke="#d8d8e0" stroke-width="1"/><line x1="498.5" y1="140.50" x2="503" y2="140.50" stroke="#d8d8e0" stroke-width="1"/><line x1="496.5" y1="134.50" x2="503" y2="134.50" stroke="#d8d8e0" stroke-width="1"/><line x1="498.5" y1="128.50" x2="503" y2="128.50" stroke="#d8d8e0" stroke-width="1"/><line x1="498.5" y1="121.50" x2="503" y2="121.50" stroke="#d8d8e0" stroke-width="1"/><line x1="498.5" y1="115.50" x2="503" y2="115.50" stroke="#d8d8e0" stroke-width="1"/><line x1="498.5" y1="108.50" x2="503" y2="108.50" stroke="#d8d8e0" stroke-width="1"/><line x1="498.5" y1="102.50" x2="503" y2="102.50" stroke="#d8d8e0" stroke-width="1"/><line x1="498.5" y1="96.50" x2="503" y2="96.50" stroke="#d8d8e0" stroke-width="1"/><line x1="498.5" y1="89.50" x2="503" y2="89.50" stroke="#d8d8e0" stroke-width="1"/><line x1="498.5" y1="83.50" x2="503" y2="83.50" stroke="#d8d8e0" stroke-width="1"/><line x1="498.5" y1="76.50" x2="503" y2="76.50" stroke="#d8d8e0" stroke-width="1"/><line x1="496.5" y1="70.50" x2="503" y2="70.50" stroke="#d8d8e0" stroke-width="1"/><line x1="545.50" y1="710" x2="545.50" y2="717.5" stroke="#d8d8e0" stroke-width="1"/><line x1="606.50" y1="710" x2="606.50" y2="714.5" stroke="#d8d8e0" stroke-width="1"/><line x1="650.50" y1="710" x2="650.50" y2="714.5" stroke="#d8d8e0" stroke-width="1"/><line x1="683.50" y1="710" x2="683.50" y2="717.5" stroke="#d8d8e0" stroke-width="1"/><line x1="711.50" y1="710" x2="711.50" y2="714.5" stroke="#d8d8e0" stroke-width="1"/><line x1="734.50" y1="710" x2="734.50" y2="714.5" stroke="#d8d8e0" stroke-width="1"/><line x1="754.50" y1="710" x2="754.50" y2="714.5" stroke="#d8d8e0" stroke-width="1"/><line x1="772.50" y1="710" x2="772.50" y2="714.5" stroke="#d8d8e0" stroke-width="1"/><line x1="788.50" y1="710" x2="788.50" y2="717.5" stroke="#d8d8e0" stroke-width="1"/><line x1="849.50" y1="710" x2="849.50" y2="714.5" stroke="#d8d8e0" stroke-width="1"/><line x1="892.50" y1="710" x2="892.50" y2="717.5" stroke="#d8d8e0" stroke-width="1"/><line x1="954.50" y1="710" x2="954.50" y2="714.5" stroke="#d8d8e0" stroke-width="1"/><line x1="997.50" y1="710" x2="997.50" y2="714.5" stroke="#d8d8e0" stroke-width="1"/><line x1="1031.50" y1="710" x2="1031.50" y2="717.5" stroke="#d8d8e0" stroke-width="1"/><line x1="1058.50" y1="710" x2="1058.50" y2="714.5" stroke="#d8d8e0" stroke-width="1"/><line x1="1081.50" y1="710" x2="1081.50" y2="714.5" stroke="#d8d8e0" stroke-width="1"/><line x1="1101.50" y1="710" x2="1101.50" y2="714.5" stroke="#d8d8e0" stroke-width="1"/><line x1="1119.50" y1="710" x2="1119.50" y2="714.5" stroke="#d8d8e0" stroke-width="1"/><line x1="1135.50" y1="710" x2="1135.50" y2="717.5" stroke="#d8d8e0" stroke-width="1"/><line x1="1196.50" y1="710" x2="1196.50" y2="714.5" stroke="#d8d8e0" stroke-width="1"/><line x1="1240.50" y1="710" x2="1240.50" y2="717.5" stroke="#d8d8e0" stroke-width="1"/><line x1="1301.50" y1="710" x2="1301.50" y2="714.5" stroke="#d8d8e0" stroke-width="1"/><path d="M504.1 396.3H512.8V376.4H521.5V352.8H530.3V324.2H539.0V282.4H547.7V206.7H556.4V102.2H565.1V222.9H573.8V290.7H582.5V329.4H591.3V355.5H600.0V371.2H608.7V375.0H617.4V370.6H626.1V394.2H634.8V395.2H643.6V394.6H652.3V370.6H661.0V273.6H669.7V381.2H678.4V427.8H687.1V432.4H695.9V411.5H704.6V399.4H713.3V379.5H722.0V292.8H730.7V399.4H739.4V415.0H748.2V433.8H756.9V429.9H765.6V354.5H774.3V438.3H783.0V453.5H791.7V443.1H800.4V376.6H809.2V453.5H817.9V457.8H826.6V386.1H835.3V465.2H844.0V474.3H852.7V476.2H861.5V485.2H870.2V471.4H878.9V495.6H887.6V495.6H896.3V499.5H905.0V502.1H913.8V504.4H922.5V517.0H931.2V508.7H939.9V511.9H948.6V505.6H957.3V526.5H966.1V528.1H974.8V528.1H983.5V538.1H992.2V559.3H1000.9V566.2H1009.6V560.4H1018.3V567.7H1027.1V580.2H1035.8V585.0H1044.5V579.2H1053.2V572.5H1061.9V578.1H1070.6V567.7H1079.4V590.7H1088.1V579.2H1096.8V567.3H1105.5V567.7H1114.2V583.3H1122.9V574.6H1131.7V584.4H1140.4V584.4H1149.1V599.4H1157.8V611.5H1166.5V608.8H1175.2V608.0H1184.0V631.3H1192.7V621.6H1201.4V609.9H1210.1V610.3H1218.8V615.0H1227.5V609.9H1236.2V615.5H1245.0V613.3H1253.7V622.5H1262.4V617.2H1271.1V617.2H1279.8V611.3H1288.5V613.3H1297.3V607.2H1306.0V607.6H1314.7V607.6H1323.4V604.1H1332.1V609.5H1340.8V609.5H1345.0" fill="none" stroke="#c8b872" stroke-width="1.4"/><path d="M504.1 466.4H512.8V443.5H521.5V416.1H530.3V381.2H539.0V334.6H547.7V258.4H556.4V155.6H565.1V273.6H573.8V341.9H582.5V387.5H591.3V423.4H600.0V447.0H608.7V460.6H617.4V477.9H626.1V501.3H634.8V510.7H643.6V516.6H652.3V526.0H661.0V470.4H669.7V533.7H678.4V555.4H687.1V567.0H695.9V577.5H704.6V585.4H713.3V548.0H722.0V448.0H730.7V562.4H739.4V585.4H748.2V550.4H756.9V609.0H765.6V547.3H774.3V624.1H783.0V623.7H791.7V614.7H800.4V555.8H809.2V636.6H817.9V649.8H826.6V591.3H835.3V657.1H844.0V627.6H852.7V596.9H861.5V657.1H870.2V589.6H878.9V664.8H887.6V636.6H896.3V670.0H905.0V631.0H913.8V672.1H922.5V682.2H931.2V660.2H939.9V672.6H948.6V655.4H957.3V681.1H966.1V675.7H974.8V674.6H983.5V688.5H992.2V707.2H1000.9V693.7H1009.6V704.8H1018.3V706.4H1027.1V695.7H1035.8V709.0H1044.5V707.5H1053.2V709.0H1061.9V708.6H1070.6V706.4H1079.4V709.0H1088.1V700.5H1096.8V699.5H1105.5V701.7H1114.2V702.5H1122.9V697.2H1131.7V706.2H1140.4V709" fill="none" stroke="#74acd8" stroke-width="1.4"/><rect x="503" y="69.5" width="841" height="2" fill="#c8c8de"/><rect x="502.5" y="70" width="2" height="640" fill="#e6e6f0"/><rect x="502.5" y="708.8" width="842" height="2" fill="#e6e6f0"/></svg>
<div class="t" style="left:481.10px;top:704px;font-size:12.5px;color:#f2f2f2;">20</div>
<div class="t" style="left:481.10px;top:640px;font-size:12.5px;color:#f2f2f2;">30</div>
<div class="t" style="left:481.10px;top:576px;font-size:12.5px;color:#f2f2f2;">40</div>
<div class="t" style="left:481.10px;top:512px;font-size:12.5px;color:#f2f2f2;">50</div>
<div class="t" style="left:481.10px;top:448px;font-size:12.5px;color:#f2f2f2;">60</div>
<div class="t" style="left:481.10px;top:385px;font-size:12.5px;color:#f2f2f2;">70</div>
<div class="t" style="left:481.10px;top:321px;font-size:12.5px;color:#f2f2f2;">80</div>
<div class="t" style="left:481.10px;top:257px;font-size:12.5px;color:#f2f2f2;">90</div>
<div class="t" style="left:474.14px;top:193px;font-size:12.5px;color:#f2f2f2;">100</div>
<div class="t" style="left:475.07px;top:129px;font-size:12.5px;color:#f2f2f2;">110</div>
<div class="t" style="left:474.14px;top:65px;font-size:12.5px;color:#f2f2f2;">120</div>
<div class="t" style="left:478.34px;top:720px;font-size:12.5px;color:#5aaee0;font-weight:bold;">dB</div>
<div class="t" style="left:538.60px;top:720px;font-size:12.5px;color:#f2f2f2;">20</div>
<div class="t" style="left:676.80px;top:720px;font-size:12.5px;color:#f2f2f2;">50</div>
<div class="t" style="left:777.87px;top:720px;font-size:12.5px;color:#f2f2f2;">100</div>
<div class="t" style="left:882.42px;top:720px;font-size:12.5px;color:#f2f2f2;">200</div>
<div class="t" style="left:1020.62px;top:720px;font-size:12.5px;color:#f2f2f2;">500</div>
<div class="t" style="left:1129.00px;top:720px;font-size:12.5px;color:#f2f2f2;">1k</div>
<div class="t" style="left:1233.55px;top:720px;font-size:12.5px;color:#f2f2f2;">2k</div>
<div class="t" style="left:650.00px;top:97px;font-size:13px;color:#c83838;transform:scaleX(1.033);">37,35 volt 22 hz 5,63 ohm vid frekvens</div>
<div class="t" style="left:650.50px;top:146px;font-size:13px;color:#c83838;transform:scaleX(1.039);">11,92 volt 22 hz 5,623 ohm vid frekvens</div>
<div class="t" style="left:936.00px;top:119px;font-size:19.5px;color:#d83636;transform:scaleX(1.125);">Micken ca 15 cm från mynningen</div>
</body></html>
